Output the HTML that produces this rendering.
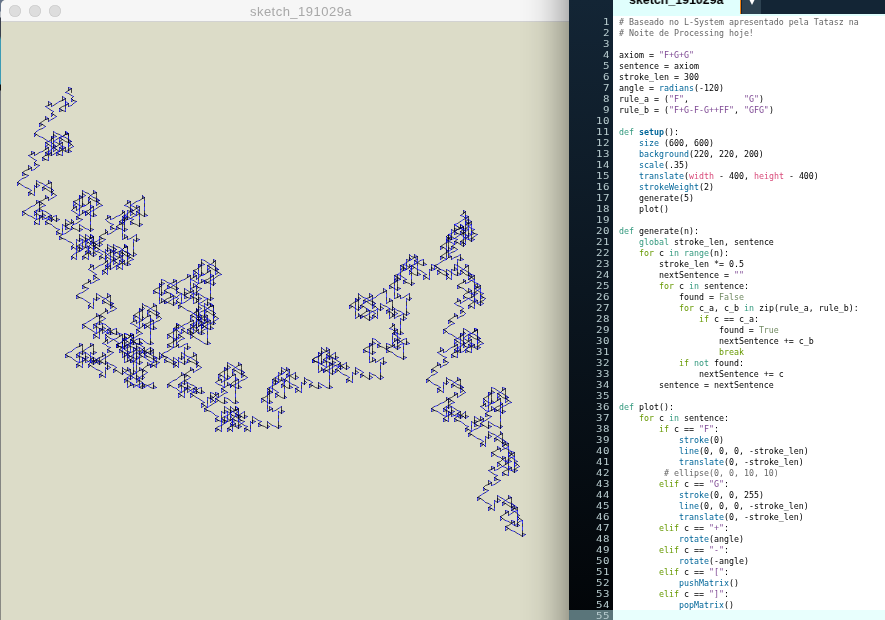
<!DOCTYPE html>
<html><head><meta charset="utf-8"><title>sketch_191029a</title>
<style>
html,body{margin:0;padding:0}
body{width:885px;height:620px;overflow:hidden;position:relative;background:#dcdcc8;font-family:"Liberation Sans",sans-serif}
#desk{position:absolute;left:0;top:0;width:8px;height:620px;background:linear-gradient(#66748a 0,#66748a 11px,#b8bcc2 12px,#b8bcc2 17px,#3a404c 18px,#3a404c 36px,#3c9bb5 40px,#3c9bb5 84px,#111 85px,#111 90px,#74787e 91px,#8a8a84 100%)}
#win{position:absolute;left:1px;top:0;width:600px;height:620px;background:#dcdcc8;border-top-left-radius:5px;overflow:hidden}
#tb{position:absolute;left:0;top:0;width:600px;height:21px;background:#f6f6f6;border-bottom:1px solid #d2d2d2}
#tb i{position:absolute;top:5px;width:12px;height:12px;border-radius:50%;background:#dddddd;box-shadow:inset 0 0 0 0.6px #c9c9c9}
#title{position:absolute;left:0;top:1px;width:600px;will-change:transform;text-align:center;font-size:13px;line-height:22px;color:#a8a8a8;letter-spacing:0.48px}
#frac{position:absolute;left:0;top:0}
#frac path{fill:none;stroke-width:0.7;stroke-linecap:round;stroke-linejoin:round;}
#shadow{position:absolute;left:519px;top:0;width:50px;height:620px;background:linear-gradient(to right,rgba(0,0,0,0) 0,rgba(0,0,0,0.015) 22%,rgba(0,0,0,0.045) 42%,rgba(0,0,0,0.10) 62%,rgba(0,0,0,0.18) 82%,rgba(0,0,0,0.27) 100%)}
#ed{position:absolute;left:569px;top:0;width:316px;height:620px;background:#fff;overflow:hidden}
#gut{position:absolute;left:0;top:0;width:44px;height:620px;background:linear-gradient(#132535,#020508)}
#hdr{position:absolute;left:44px;top:0;width:272px;height:14px;background:#132535}
#band{position:absolute;left:44px;top:14px;width:272px;height:2px;background:#e0fffd}
#tab{position:absolute;left:44px;top:0;width:127px;height:16px;background:#e0fffd}
#tabt{will-change:transform;position:absolute;left:60px;top:-7.6px;transform:scaleX(0.954);transform-origin:0 0;font-weight:bold;font-size:13px;line-height:16px;color:#000;white-space:pre}
#org{position:absolute;left:171px;top:0;width:1px;height:14px;background:#ef8115}
#arr{position:absolute;left:173px;top:0;width:19px;height:14px;background:#2d4251}
#arr b{position:absolute;left:6px;top:-3px;width:0;height:0;border-left:4px solid transparent;border-right:4px solid transparent;border-top:8px solid #fff}
#hl{position:absolute;left:0;top:610px;width:316px;height:11px;background:#e8fffd}
#hlg{position:absolute;left:0;top:610px;width:44px;height:11px;background:#5a757a}
#nums{position:absolute;left:0;top:16px;width:40.6px;will-change:transform;transform:scaleX(1.15);transform-origin:100% 0}
.n{height:11px;line-height:11px;text-align:right;font-family:"DejaVu Sans Mono","Liberation Mono",monospace;font-size:9.4px;letter-spacing:0.51px;color:#b9cdd0;margin-right:-0.51px}
#code{position:absolute;left:50px;top:17px;will-change:transform}
.ln{height:11px;line-height:11px;white-space:pre;font-family:"DejaVu Sans Mono","Liberation Mono",monospace;font-size:8.3px;color:#000}
.ln i{font-style:normal}
.c{color:#666666}.s{color:#7d4793}.f{color:#006699}.k{color:#33997e}.g{color:#669900}.n2{}.ln .n{} 
i.n{color:#718a62;font-size:inherit;letter-spacing:0;margin:0;height:auto;line-height:inherit;font-family:inherit}
.v{color:#d94a7a}.b{color:#006699;font-weight:bold}
</style></head><body>
<div id="desk"></div>
<div id="win"><div id="tb"><i style="left:8px"></i><i style="left:28px"></i><i style="left:48px"></i></div><div id="title">sketch_191029a</div></div>
<svg id="frac" width="885" height="620" viewBox="0 0 885 620"><g transform="translate(0.5 0.5)">
<path stroke="#000" d="M71 92v-4M68 90v-3M68 90l-3 2M68 93l3 2M73 96l-2 2M73 100l-2 1M73 100l3 1M73 103l-2 2M68 106v-3M65 105v-4M65 105l-3 1l-3 2M62 110l-3 1M62 110l3 1M65 108v-3M65 101v-3M62 100v-4M62 100l-3 1M56 103l-3 2M51 106v-3M48 105v-4M48 105l-3 1M48 108l3 2M53 111l-2 2M53 114l-2 2M53 114l3 2M53 118l-2 1M48 121v-3M45 119v-3M45 119l-3 2l-3 2M42 124l-3 2M42 124l3 2M42 128l-3 1M36 131l-2 2M36 134l-2 2M36 134l3 2M42 137l3 2M48 141l-3 1M48 144l-3 2M48 144l3 2M51 142v-3M51 136l2 1M53 134l3 2M53 134v-3M56 133l3 1M62 136l-3 1M62 139l-3 2M62 139l3 2l3 1M68 139l3 2M68 139v-3v-3M65 134v-3M65 134l-3 2M65 137l3 2M71 144l-3 2M71 144l2 2M71 147l-3 2M65 151v-4M62 149v-3M62 149l-3 2l-3 1M59 154l-3 1M59 154l3 1M62 152v-3M62 146v-4M59 144v-3M59 144l-3 2M53 147l-2 2M48 151l-3 1M48 154l-3 1M48 154l3 1M51 152v-3M51 146l2 1M53 144l3 2M53 144v-3M56 142l3 2M62 146l-3 1M62 149l3 2l3 1M68 149l3 2M68 149v-3M59 137l-3 2M53 141v-4M51 139l-3 2M51 142l2 2M56 149l-3 2M56 149l3 2M56 152l-3 2M48 154v-3M45 155l-3 2M45 159l-3 1M45 159l3 1M48 157v-3M48 151v-4M45 149v-3M45 149l-3 2M39 152l-3 2M34 155v-3M31 154v-3M31 154l-3 1M31 157l3 2M36 160l-2 2M36 164l-2 1M36 164l3 1M36 167l-2 2M31 170v-3M28 169v-4M28 169l-3 1l-3 2M25 174l-3 1M25 174l3 1M25 177l-3 1M19 180l-2 2M19 183l-2 2M19 183l3 2M25 187l3 1M31 190l-3 2M31 193l-3 2M31 193l3 2M34 192v-4M34 185l2 2M36 183l3 2M36 183v-3M39 182l3 1M45 185l-3 2M45 188l-3 2M45 188l3 2l3 2M51 188l2 2M51 188v-3v-3M48 183v-3M48 183l-3 2M48 187l3 1M53 193l-2 2M53 193l3 2M53 197l-2 1M48 200v-3M45 198v-3M45 198l-3 2l-3 1M42 203l-3 2M42 203l3 2M42 206l-3 2M36 210l-2 1M36 213l-2 2M36 213l3 2M42 216l3 2M48 219l3 2M51 218l2 1M51 218v-3M48 216l-3 2M42 219v-3M39 218v-3M39 218l-3 1M36 216v-3M36 210l3 1M39 208l3 2M39 208v-3M36 203v-3M36 203l-2 2M31 206l-3 2M25 210l-3 1M25 213l-3 2M25 213l3 2M31 216l3 2M36 219l-2 2M36 223l-2 1M36 223l3 1M39 221v-3M42 213l3 2M42 213v-3M45 211l3 2M51 218l-3 1M53 219l3 2M56 218l3 1M56 218v-3M53 216l-2 2M48 219l-3 2M48 223l-3 1M48 223l3 1M53 226l3 2M59 229l-3 2M59 233l-3 1M59 233l3 1M62 231v-3M62 224l3 2M65 223l3 1M65 223v-4M68 221l3 2M73 224l-2 2M73 228l-2 1M73 228l3 1l3 2M79 228l3 1M79 228v-4M82 226l3 2M88 229l2 2M90 228l3 1M90 228v-4M90 221v-3M90 215l3 1M93 213l3 2M93 213v-3M90 211l-2 2M85 215v-4M82 213v-3M82 213l-3 2M79 211v-3M79 205l3 1M82 203l3 2M82 203v-3v-3M79 198v-3M79 198l-3 2l-3 1M76 203l-3 2M76 203l3 2M79 201v-3M82 193l3 2M82 193v-3M85 192l3 1M90 195l-2 2M90 198l-2 2M90 198l3 2l3 1M96 198l3 2M96 198v-3v-3M93 193v-3M93 193l-3 2M93 197l3 1M99 203l-3 2M99 203l3 2M99 206l-3 2M93 210v-4M90 208v-3M90 208l-2 2l-3 1M88 213l2 2M90 211v-3M90 205v-4M88 203v-3M88 203l-3 2M82 206l-3 2M76 210v-4M73 208v-3M73 208l-2 2M73 211l3 2M79 215l-3 1M79 218l-3 1M79 218l3 1M79 221l-3 2M73 224v-3M71 223v-4M71 223l-3 1M68 228l-3 1M68 228l3 1M68 231l-3 2M62 234l-3 2M62 238l-3 1M62 238l3 1M68 241l3 1M73 244l-2 2M73 247l-2 2M73 247l3 2M76 246v-4M76 239l3 2M79 238l3 1M79 238v-4M82 236l3 2M88 239l-3 2M88 242l-3 2M88 242l2 2l3 2M93 242l3 2M93 242v-3v-3M90 238v-4M90 238l-2 1M90 241l3 1M96 247l-3 2M96 247l3 2M96 251l-3 1M90 254v-3M88 252v-3M88 252l-3 2l-3 2M85 257l-3 2M85 257l3 2M88 256v-4M88 249v-3M85 247v-3M85 247l-3 2M79 251l-3 1M73 254l-2 2M73 257l-2 2M73 257l3 2M76 256v-4M76 249l3 2M79 247l3 2M79 247v-3M82 246l3 1M88 249l-3 2M88 252l2 2l3 2M93 252l3 2M93 252v-3M85 241l-3 1M79 244l-3 2M79 247l-3 2M82 246v-4M82 239l3 2M85 238v-4M88 236l2 2M93 239l-3 2M93 242l-3 2M96 244l3 2M99 242l3 2M99 242v-3M96 241l-3 1M90 244l-2 2M90 247l-2 2M90 247l3 2M96 251l3 1M102 254l-3 2M102 257l-3 2M102 257l3 2M105 256v-4M105 249l2 2M107 247l3 2M107 247v-3M110 246l3 1M116 249l-3 2M116 252l-3 2M116 252l3 2l3 2M122 252l2 2M122 252v-3M124 251l3 1M130 254l3 2M133 252l3 2M133 252v-3M133 246v-4M133 239l3 2M136 238l3 1M136 238v-4M133 236l-3 2M127 239v-3M124 238v-4M124 238l-2 1M122 236v-3M122 229l2 2M124 228l3 1M124 228v-4v-3M122 223v-4M122 223l-3 1l-3 2M119 228l-3 1M119 228l3 1M122 226v-3M124 218l3 1M124 218v-3M127 216l3 2M133 219l-3 2M133 223l-3 1M133 223l3 1l3 2M139 223l3 1M139 223v-4M139 216v-3M139 210v-4M136 208v-3M136 208l-3 2M130 211l-3 2M124 215l-2 1M124 218l-2 1M127 216v-3M127 210l3 1M130 208l3 2M130 208v-3M133 206l3 2M139 210l-3 1M139 213l-3 2M139 213l3 2l2 1M144 213l3 2M144 213v-3M144 206v-3M144 200v-3M142 198v-3M142 198l-3 2M136 201l-3 2M130 205v-4M127 203v-3M127 203l-3 2M127 206l3 2M133 213l-3 2M133 213l3 2M133 216l-3 2M122 219l-3 2M122 223l2 1M124 215v-4M122 213v-3M122 213l-3 2M116 216l-3 2M110 219v-3M107 218v-3M107 218l-2 1M107 221l3 2M113 224l-3 2M113 228l-3 1M113 228l3 1M113 231l-3 2M107 234v-3M105 233v-4M105 233l-3 1l-3 2M102 238l-3 1M102 238l3 1M102 241l-3 1M102 251l3 1M107 254l-2 2M107 257l-2 2M107 257l3 2M110 256v-4M110 249l3 2M113 247v-3M116 246l3 1M122 249l-3 2M122 252l-3 2M124 254l3 2M127 252v-3v-3M124 247v-3M124 247l-2 2M130 257l-3 2M130 257l3 2M130 260l-3 2M124 264v-4M122 262v-3M122 262l-3 2l-3 1M119 267l-3 2M119 267l3 2M122 265v-3M122 259v-3M119 257v-3M119 257l-3 2M113 260l-3 2M107 264l-2 1M107 267l-2 2M107 267l3 2M110 265v-3M110 259l3 1M113 257l3 2M113 257v-3M116 256l3 1M122 259l-3 1M122 262l2 2l3 1M127 262l3 2M127 262v-3M119 251l-3 1M110 252l-3 2M110 256l3 1M116 262l-3 2M116 262l3 2M116 265l-3 2M107 267v-3M105 269l-3 1M105 272l-3 2M105 272l2 2M107 270v-3M107 264v-4M105 262v-3M105 262l-3 2M99 265l-3 2M93 269v-4M90 267v-3M90 267l-2 2M90 270l3 2M96 274l-3 1M96 277l-3 2M96 277l3 2M96 280l-3 2M90 283v-3M88 282v-3M88 282l-3 1l-3 2M85 287l-3 1M85 287l3 1M85 290l-3 2M79 293l-3 2M79 297l-3 1M79 297l3 1M85 300l3 2M90 303l-2 2M90 306l-2 2M90 306l3 2M93 305v-3M93 298l3 2M96 297l3 1M96 297v-4M99 295l3 2M105 298l-3 2M105 302l-3 1M105 302l2 1l3 2M110 302l3 1M110 302v-4v-3M107 297v-4M107 297l-2 1M107 300l3 2M113 306l-3 2M113 306l3 2M113 310l-3 1M107 313v-3M105 311v-3M105 311l-3 2l-3 2M102 316l-3 2M102 316l3 2M102 320l-3 1M96 323l-3 1M96 326l-3 2M96 326l3 2M102 329l3 2M107 333l3 1M110 331l3 2M110 331v-3M107 329l-2 2M102 333v-4M99 331v-3M99 331l-3 2M96 329v-3M96 323l3 1M99 321l3 2M99 321v-3M96 316v-3M96 316l-3 2M90 320l-2 1M85 323l-3 1M85 326l-3 2M85 326l3 2M90 329l3 2M96 333l-3 1M96 336l-3 2M96 336l3 2M99 334v-3M102 326l3 2M102 326v-3M105 324l2 2M110 331l-3 2M113 333l3 1M116 331l3 2M116 331v-3M113 329l-3 2M107 333l-2 1M107 336l-2 2M107 336l3 2M113 339l3 2M119 343l-3 1M119 346l-3 1M119 346l3 1M122 344v-3M122 338l2 1M124 336l3 2M124 336v-3M127 334l3 2M133 338l-3 1M133 341l-3 2M133 341l3 2l3 1M139 341l3 2M139 341v-3M142 339l2 2M147 343l3 1M150 341l3 2M150 341v-3M150 334v-3M150 328l3 1M153 326l3 2M153 326v-3M150 324l-3 2M144 328v-4M142 326v-3M142 326l-3 2M139 324v-3M139 318l3 2M142 316l2 2M142 316v-3v-3M139 311v-3M139 311l-3 2l-3 2M136 316l-3 2M136 316l3 2M139 315v-4M142 306l2 2M142 306v-3M144 305l3 1M150 308l-3 2M150 311l-3 2M150 311l3 2l3 2M156 311l3 2M156 311v-3v-3M153 306v-3M153 306l-3 2M153 310l3 1M159 316l-3 2M159 316l2 2M159 320l-3 1M153 323v-3M150 321v-3M150 321l-3 2l-3 1M147 326l3 2M150 324v-3M150 318v-3M147 316v-3M147 316l-3 2M142 320l-3 1M136 323v-3M133 321v-3M133 321l-3 2M133 324l3 2M139 328l-3 1M139 331l-3 2M139 331l3 2M139 334l-3 2M133 338v-4M130 336v-3M130 336l-3 2M127 341l-3 2M127 341l3 2M127 344l-3 2M122 347l-3 2M122 351l-3 1M122 351l2 1M127 354l3 2M133 357l-3 2M133 361l-3 1M133 361l3 1M136 359v-3M136 352l3 2M139 351l3 1M139 351v-4M142 349l2 2M147 352l-3 2M147 356l-3 1M147 356l3 1l3 2M153 356l3 1M153 356v-4v-3M150 351v-4M150 351l-3 1M150 354l3 2M156 361l-3 1M156 361l3 1M156 364l-3 1M150 367v-3M147 365v-3M147 365l-3 2l-2 2M144 370l-2 2M144 370l3 2M144 374l-2 1M139 377l-3 2M139 380l-3 2M139 380l3 2M144 384l3 1M150 387l3 1M153 385l3 2M153 385v-3M150 384l-3 1M144 387v-3M142 385v-3M142 385l-3 2M139 384v-4M139 377l3 2M142 375l2 2M142 375v-3M139 370v-3M139 370l-3 2M133 374l-3 1M127 377l-3 2M127 380l-3 2M127 380l3 2M133 384l3 1M139 387l3 1M142 385l2 2M139 384l-3 1M133 387v-3M130 385v-3M130 385l-3 2M127 384v-4M127 377l3 2M130 375l3 2M130 375v-3v-3M127 370v-3M127 370l-3 2M127 374l3 1M133 377l3 2M136 375l3 2M136 375v-3M136 369v-4M136 362l3 2M139 361l3 1M139 361v-4M136 359l-3 2M127 361v-4M127 361l-3 1M124 359v-3M127 351l3 1M127 351v-4v-3M124 346v-3M122 338v-4M119 336v-3M119 336l-3 2M113 339l-3 2M107 343v-4M105 341v-3M105 341l-3 2M105 344l2 2M110 347l-3 2M110 351l-3 1M110 351l3 1M110 354l-3 2M105 357v-3M102 356v-4M102 356l-3 1l-3 2M99 361l-3 1M99 361l3 1l3 2M105 361l2 1M105 361v-4M102 359l-3 2M93 361v-4M93 361l-3 1M90 359v-3M90 352l3 2M93 351l3 1M93 351v-4v-3M90 346v-3M90 346l-2 1M85 349l-3 2M79 352l-3 2M79 356l-3 1M79 356l3 1M85 359l3 2M90 362l3 2M93 361l3 1M90 359l-2 2M85 362v-3M82 361v-4M82 361l-3 1M79 359v-3M79 352l3 2M82 351l3 1M82 351v-4v-3M79 346v-3M79 346l-3 1M73 349l-2 2M68 352l-3 2M68 356l-3 1M68 356l3 1M73 359l3 2M79 362l-3 2M79 365l-3 2M79 365l3 2M82 364v-3M85 356l3 1M85 356v-4M88 354l2 2M96 362l3 2M99 361v-4M90 362l-2 2M90 365l-2 2M90 365l3 2M96 369l3 1M102 372l-3 2M102 375l-3 2M102 375l3 2M105 374v-4M105 367l2 2M107 365l3 2M107 365v-3M110 364l3 1M116 367l-3 2M116 370l-3 2M116 370l3 2l3 2M122 370l2 2M122 370v-3M124 369l3 1M130 372l3 2M133 370l3 2M133 370v-3M133 364v-3M133 357l3 2M136 356l3 1M133 354l-3 2M127 357v-3M124 356l-2 1M122 354v-3M122 347l2 2M124 346l3 1M122 341l-3 2M136 339l-3 2M130 346l-3 1M130 346l3 1M136 349l3 2M142 352l2 2M144 351v-4M142 349l-3 2M136 352v-3M133 351v-4M133 351l-3 1M130 349v-3M130 343l3 1M133 341v-3M124 349l3 2M133 354v-3M136 346l3 1M136 346v-3M139 344l3 2M144 351l-2 1M150 351l3 1M147 349l-3 2M142 356l-3 1M142 356l2 1M147 359l3 2M153 362l-3 2M153 365l3 2M156 364v-3M156 357l3 2M159 356l2 1M159 356v-4M161 354l3 2M167 357l-3 2M167 361l-3 1M167 361l3 1l3 2M173 361l3 1M173 361v-4M176 359l2 2M181 362l3 2M184 361l3 1M184 361v-4M184 354v-3M184 347l3 2M187 346l3 1M187 346v-3M184 344l-3 2M178 347v-3M176 346v-3M176 346l-3 1M173 344v-3M173 338l3 1M176 336l2 2M176 336v-3v-4M173 331v-3M173 331l-3 2l-3 1M170 336l-3 2M170 336l3 2M173 334v-3M176 326l2 2M176 326v-3M178 324l3 2M184 328l-3 1M184 331l-3 2M184 331l3 2l3 1M190 331l3 2M190 331v-3M193 329l3 2M198 333l3 1M201 331l3 2M201 331v-3M201 324v-3M201 318v-3M198 316v-3M198 316l-2 2M198 320l3 1M204 323l-3 1M204 326l-3 2M204 326l3 2M204 329l-3 2M198 333v-4M196 331v-3M196 331l-3 2M193 336l-3 2M193 336l3 2M198 339l3 2M204 343l3 1M207 341l3 2M207 341v-3M207 334v-3M207 328l3 1M210 326l3 2M210 326v-3M207 324l-3 2M198 326v-3M198 326l-2 2M196 324v-3M198 316l3 2M198 313v-3M196 311v-3M196 311l-3 2M196 315l2 1M201 318l3 2M204 316l3 2M204 316v-3M204 310v-4M204 303l3 2M207 302l3 1M207 302v-4M204 300l-3 2M198 303v-3M196 302v-4M196 302l-3 1M193 300v-3M193 293l3 2M196 292l2 1M196 292v-4v-3M193 287v-4M193 287l-3 1M190 285v-3M190 279v-4M187 277v-3M187 277l-3 2M181 280l-3 2M176 283v-3M173 282v-3M173 282l-3 1M173 285l3 2M178 288l-2 2M178 292l-2 1M178 292l3 1M178 295l-2 2M173 298v-3M170 297v-4M170 297l-3 1l-3 2M167 302l-3 1M167 302l3 1l3 2M173 302l3 1M173 302v-4M170 300l-3 2M161 302v-4M161 302l-2 1M159 300v-3M159 293l2 2M161 292l3 1M161 292v-4v-3M159 287v-4M159 287l-3 1l-3 2M156 292l-3 1M156 292l3 1M159 290v-3M161 282l3 1M161 282v-3M164 280l3 2M170 283l-3 2M170 287l-3 1M170 287l3 1l3 2M176 287v-4M173 285l-3 2M167 288l-3 2M167 292l-3 1M167 292l3 1M173 295l3 2M178 298l-2 2M178 302l-2 1M178 302l3 1M181 300v-3M181 293l3 2M184 292l3 1M184 292v-4M187 290l3 2M193 293l-3 2M193 297l-3 1M193 297l3 1M198 297l3 1M198 297v-4M201 295l3 2M207 298l3 2M210 297l3 1M210 297v-4M210 290v-3M210 283l3 2M213 282l2 1M213 282v-3M210 280l-3 2M204 283v-3M201 282v-3M201 282l-3 1M198 280v-3M198 274l3 1M201 272l3 2M201 272v-3v-4M198 267v-3M198 267l-2 2l-3 1M196 272l-3 2M196 272l2 2M198 270v-3M201 262l3 2M201 262v-3M204 260l3 2M210 264l-3 1M210 267l-3 2M210 267l3 2l2 1M215 267l3 2M215 267v-3v-4M213 262v-3M213 262l-3 2M213 265l2 2M218 272l-3 2M218 272l3 2M218 275l-3 2M213 279v-4M210 277v-3M210 277l-3 2l-3 1M207 282l3 1M210 280v-3M210 274v-4M207 272v-3M207 272l-3 2M201 275l-3 2M196 279v-4M193 277v-3M193 277l-3 2M193 280l3 2M198 283l-2 2M198 287l-2 1M198 287l3 1M198 290l-2 2M193 293v-3M190 292v-4M190 292l-3 1M187 297l-3 1M187 297l3 1M187 300l-3 2M181 303l-3 2M181 306l-3 2M181 306l3 2M187 310l3 1M193 313l-3 2M193 316l-3 2M193 316l3 2M196 315v-4M198 306l3 2M198 306v-3M201 305l3 1M207 308l-3 2M207 311l-3 2M207 311l3 2l3 2M213 311l2 2M213 311v-3v-3M210 306v-3M210 306l-3 2M210 310l3 1M215 316l-2 2M215 316l3 2M215 320l-2 1M210 323v-3M207 321v-3M207 321l-3 2M207 324v-3M207 318v-3M204 316l-3 2M198 320l-2 1M193 323l-3 1M193 326l-3 2M193 326l3 2M201 315l3 1M207 321l3 2l3 1M213 321l2 2M213 321v-3M204 310l-3 1M201 321l-3 2M193 326v-3M190 328l-3 1M190 331l-3 2M193 329v-3M193 323v-3M190 321v-3M190 321l-3 2M184 324l-3 2M178 328v-4M176 326l-3 2M176 329l2 2M181 333l-3 1M181 336l-3 2M181 336l3 2M181 339l-3 2M176 343v-4M173 341l-3 2l-3 1M170 346l-3 1M170 346l3 1M170 349l-3 2M164 352l-3 2M164 356l-3 1M170 359l3 2M176 365l-3 2M176 365l2 2M178 364v-3M178 357l3 2M181 356l3 1M181 356v-4M184 354l3 2M190 357l-3 2M190 361l-3 1M190 361l3 1l3 2M196 361l2 1M196 361v-4v-3M193 356v-4M193 356l-3 1M193 359l3 2M198 365l-2 2M198 365l3 2M198 369l-2 1M193 372v-3M190 370v-3M190 370l-3 2l-3 2M187 375l-3 2M187 375l3 2M187 379l-3 1M181 382l-3 2M181 385l-3 2M181 385l3 2M187 388l3 2M193 392l3 1M196 390l2 2M196 390v-3M193 388l-3 2M187 392v-4M184 390v-3M184 390l-3 2M181 388v-3M181 382l3 2M184 380l3 2M184 380v-3M181 375v-3M181 375l-3 2M176 379l-3 1M170 382l-3 2M170 385l-3 2M170 385l3 2M176 388l2 2M181 392l-3 1M181 395l-3 2M181 395l3 2M184 393v-3M187 385l3 2M187 385v-3M190 384l3 1M196 390l-3 2M198 392l3 1M201 390l3 2M201 390v-3M198 388l-2 2M193 392l-3 1M193 395l-3 2M193 395l3 2M198 398l3 2M204 402l-3 1M204 405l-3 2M204 405l3 2M207 403v-3M207 397l3 1M210 395l3 2M210 395v-3M213 393l2 2M218 397l-3 1M218 400l-3 2M218 400l3 2l3 1M224 400l3 2M224 400v-3M227 398l3 2M232 402l3 1M235 400l3 2M235 400v-3M235 393v-3M235 387l3 1M238 385l3 2M238 385v-3M235 384l-3 1M230 387v-3M227 385v-3M227 385l-3 2M224 384v-4M224 377l3 2M227 375l3 2M227 375v-3v-3M224 370v-3M224 370l-3 2l-3 2M221 375l-3 2M221 375l3 2M224 374v-4M227 365l3 2M227 365v-3M230 364l2 1M235 367l-3 2M235 370l-3 2M235 370l3 2l3 2M241 370l3 2M241 370v-3v-3M238 365v-3M238 365l-3 2M238 369l3 1M244 375l-3 2M244 375l3 2M244 379l-3 1M238 382v-3M235 380v-3M235 380l-3 2l-2 2M232 385l3 2M235 384v-4M235 377v-3M232 375v-3M232 375l-2 2M227 379l-3 1M221 382v-3M218 380v-3M218 380l-3 2M218 384l3 1M224 387l-3 1M224 390l-3 2M224 390l3 2M224 393l-3 2M218 397v-4M215 395v-3M215 395l-2 2M213 400l-3 2M213 400l2 2M213 403l-3 2M207 407l-3 1M207 410l-3 1M207 410l3 1M213 413l2 2M218 416l-3 2M218 420l-3 1M218 420l3 1M221 418v-3M221 411l3 2M224 410l3 1M224 410v-4M227 408l3 2M232 411l-2 2M232 415l-2 1M232 415l3 1l3 2M238 415l3 1M238 415v-4v-3M235 410v-4M235 410l-3 1M235 413l3 2M241 420l-3 1M241 420l3 1M241 423l-3 2M235 426v-3M232 425v-4M232 425l-2 1l-3 2M230 429l-3 2M230 429l2 2M232 428v-3M232 421v-3M230 420v-4M230 420l-3 1M224 423l-3 2M218 426l-3 2M218 429l-3 2M218 429l3 2M221 428v-3M221 421l3 2M224 420l3 1M224 420v-4M227 418l3 2M232 421l-2 2M232 425l3 1l3 2M238 425l3 1M238 425v-4M230 413l-3 2M224 416l-3 2M224 420l-3 1M227 418v-3M227 411l3 2M230 410v-4M232 408l3 2M238 411l-3 2M238 415l-3 1M241 416l3 2M244 415l3 1M244 415v-4M241 413l-3 2M235 416l-3 2M235 420l-3 1M235 420l3 1M241 423l3 2M247 426l-3 2M247 429l-3 2M247 429l3 2M250 428v-3M250 421l2 2M252 420l3 1M252 420v-4M255 418l3 2M261 421l-3 2M261 425l-3 1M261 425l3 1l3 2M267 425l2 1M267 425v-4M269 423l3 2M275 426l3 2M278 425l3 1M278 425v-4M278 418v-3M278 411l3 2M281 410l3 1M281 410v-4M278 408l-3 2M272 411v-3M269 410v-4M269 410l-2 1M267 408v-3M267 402l2 1M269 400l3 2M269 400v-3v-4M267 395v-3M267 395l-3 2l-3 1M264 400l-3 2M264 400l3 2M267 398v-3M269 390l3 2M269 390v-3M272 388l3 2M278 392l-3 1M278 395l-3 2M278 395l3 2l3 1M284 395l2 2M284 395v-3M284 388v-3M284 382v-3M281 380v-3M281 380l-3 2M275 384l-3 1M269 387l-2 1M269 390l-2 2M272 388v-3M272 382l3 2M275 380l3 2M275 380v-3M278 379l3 1M284 382l-3 2M284 385l-3 2M284 385l2 2l3 1M289 385l3 2M289 385v-3M289 379v-4M289 372v-3M286 370v-3M286 370l-2 2M281 374l-3 1M275 377l-3 2M275 380l-3 2M278 379v-4M278 372l3 2M281 370l3 2M281 370v-3M284 369l2 1M289 372l-3 2M289 375l-3 2M289 375l3 2l3 2M295 375l3 2M295 375v-3M292 374l-3 1M286 377l-2 2M286 380l-2 2M286 380l3 2M292 384l3 1M298 387l-3 1M298 390l-3 2M298 390l3 2M301 388v-3M301 382l3 2M304 380l2 2M304 380v-3M306 379l3 1M312 382l-3 2M312 385l-3 2M312 385l3 2l3 1M318 385l3 2M318 385v-3M321 384l2 1M326 387l3 1M329 385l3 2M329 385v-3M329 379v-4M329 372l3 2M332 370l3 2M332 370v-3M329 369l-3 1M323 372v-3M321 370v-3M321 370l-3 2M318 369v-4M318 362l3 2M321 361l2 1M321 361v-4v-3M318 356v-4M318 356l-3 1l-3 2M315 361l-3 1M315 361l3 1M318 359v-3M321 351l2 1M321 351v-4M323 349l3 2M329 352l-3 2M329 356l-3 1M329 356l3 1l3 2M335 356l3 1M335 356v-4M332 354l-3 2M326 357l-3 2M326 361l-3 1M326 361l3 1M332 364l3 1M338 367l2 2M340 365l3 2M340 365v-3M338 364l-3 1M332 367v-3M329 365v-3M329 365l-3 2M326 364v-3M326 357l3 2M329 356v-4v-3M326 351v-4M326 351l-3 1M321 364l2 1M326 367l-3 2M326 370l3 2M329 369v-4M332 361l3 1M332 361v-4M335 359l3 2M340 365l-2 2M343 367l3 2M346 365l3 2M346 365v-3M343 364l-3 1M338 367l-3 2M338 370l-3 2M338 370l2 2M343 374l3 1M349 377l-3 2M349 380l-3 2M349 380l3 2M352 379v-4M352 372l3 2M355 370l3 2M355 370v-3M358 369l2 1M363 372l-3 2M363 375l-3 2M363 375l3 2l3 2M369 375l3 2M369 375v-3M372 374l3 1M377 377l3 2M380 375l3 2M380 375v-3M380 369v-4M380 362l3 2M383 361l3 1M383 361v-4M380 359l-3 2M375 362v-3M372 361v-4M372 361l-3 1M369 359v-3M369 352l3 2M372 351l3 1M372 351v-4v-3M369 346v-3M369 346l-3 1l-3 2M366 351l-3 1M366 351l3 1M369 349v-3M372 341l3 2M372 341v-3M375 339l2 2M380 343l-3 1M380 346l-3 1M380 346l3 1l3 2M386 346l3 1M386 346v-3M389 344l3 2M394 347l3 2M397 346l3 1M397 346v-3M397 339v-3M397 333v-4M394 331v-3M394 331l-2 2M394 334l3 2M400 338l-3 1M400 341l-3 2M400 341l3 2M400 344l-3 2M394 347v-3M392 346v-3M392 346l-3 1M389 351l-3 1M389 351l3 1M394 354l3 2M400 357l3 2M403 356l3 1M403 356v-4M403 349v-3M403 343l3 1M406 341l3 2M406 341v-3M403 339l-3 2M394 341v-3M394 341l-2 2M392 339v-3M394 331l3 2M394 328v-4M392 326v-3M392 326l-3 2M392 329l2 2M397 333l3 1M400 331l3 2M400 331v-3M400 324v-3M400 318l3 2M403 316l3 2M403 316v-3M400 315l-3 1M394 318v-3M392 316v-3M392 316l-3 2M389 315v-4M389 308l3 2M392 306l2 2M392 306v-3v-3M389 301v-3M389 301l-3 2M386 300v-3M386 293v-3M383 292v-4M383 292l-3 1M377 295l-2 2M372 298v-3M369 297v-4M369 297l-3 1M369 300l3 1M375 303l-3 2M375 306l-3 2M375 306l2 2M375 310l-3 1M369 313v-3M366 311v-3M366 311l-3 2l-3 2M363 316l-3 2M363 316l3 2l3 2M369 316l3 2M369 316v-3M366 315l-3 1M358 316v-3M358 316l-3 2M355 315v-4M355 308l3 2M358 306l2 2M358 306v-3v-3M355 301v-3M355 301l-3 2l-3 2M352 306l-3 2M352 306l3 2M355 305v-4M358 297l2 1M358 297v-4M360 295l3 2M366 298l-3 2M366 301l-3 2M366 301l3 2l3 2M372 301v-3M369 300l-3 1M363 303l-3 2M363 306l-3 2M363 306l3 2M369 310l3 1M375 313l-3 2M375 316l-3 2M375 316l2 2M377 315v-4M377 308l3 2M380 306l3 2M380 306v-3M383 305l3 1M389 308l-3 2M389 311l-3 2M389 311l3 2M394 311l3 2M394 311v-3M397 310l3 1M403 313l3 2M406 311l3 2M406 311v-3M406 305v-4M406 298l3 2M409 297l2 1M409 297v-4M406 295l-3 2M400 298v-3M397 297v-4M397 297l-3 1M394 295v-3M394 288l3 2M397 287l3 1M397 287v-4v-3M394 282v-3M394 282l-2 1l-3 2M392 287l-3 1M392 287l2 1M394 285v-3M397 277l3 2M397 277v-3M400 275l3 2M406 279l-3 1M406 282l-3 1M406 282l3 1l2 2M411 282l3 1M411 282v-3M411 275v-3M411 269v-4M409 267v-3M409 267l-3 2M403 270l-3 2M397 274l-3 1M397 277l-3 2M400 275v-3M400 269l3 1M403 267l3 2M403 267v-3M406 265l3 2M411 269l-2 1M411 272l-2 2M411 272l3 2l3 1M417 272l3 2M417 272v-3M417 265v-3M417 259v-3M414 257v-3M414 257l-3 2M409 260l-3 2M403 264l-3 1M403 267l-3 2M406 265v-3M406 259l3 1M409 257l2 2M409 257v-3M411 256l3 1M417 259l-3 1M417 262l-3 2M417 262l3 2l3 1M423 262l3 2M423 262v-3M420 260l-3 2M414 264l-3 1M414 267l-3 2M414 267l3 2M420 270l3 2M426 274l-3 1M426 277l-3 2M426 277l3 2M429 275v-3M429 269l2 1M431 267l3 2M431 267v-3M434 265l3 2M440 269l-3 1M440 272l-3 2M440 272l3 2l3 1M446 272l2 2M446 272v-3M448 270l3 2M454 274l3 1M457 272l3 2M457 272v-3M457 265v-3M457 259l3 1M460 257l3 2M460 257v-3M457 256l-3 1M451 259v-3M448 257v-3M448 257l-2 2M446 256v-4M446 249l2 2M448 247l3 2M448 247v-3v-3M446 242v-3M446 242l-3 2l-3 2M443 247l-3 2M443 247l3 2M446 246v-4M448 238l3 1M448 238v-4M451 236l3 2M457 239l-3 2M457 242l-3 2M457 242l3 2l3 2M463 242l2 2M463 242v-3M463 236v-3M463 229v-3M460 228v-4M460 228l-3 1M454 231l-3 2M448 234l-2 2M448 238l-2 1M451 236v-3M451 229l3 2M454 228l3 1M454 228v-4M457 226l3 2M463 229l-3 2M463 233l-3 1M463 233l2 1l3 2M468 233l3 1M468 233v-4M468 226v-3M468 219v-3M465 218v-3M465 218l-2 1M460 221l-3 2M463 229l2 2M465 228l3 1M465 228v-4M465 221v-3M465 215v-4M463 213v-3M463 213l-3 2M463 216l2 2M468 219l-3 2M468 223l-3 1M468 223l3 1M468 226l-3 2M457 233l-3 1M457 233l3 1M463 236l2 2M468 239l3 2M471 238l3 1M471 238v-4M471 231v-3M471 224v-3M468 226l3 2M474 229l-3 2M474 233l-3 1M474 233l3 1M474 236l-3 2M468 239v-3M465 238v-4M465 238l-2 1l-3 2M463 242l-3 2M465 241v-3M465 234v-3M457 236l-3 2M448 241l3 1M454 244l-3 2M454 247l-3 2M454 247l3 2M454 251l-3 1M448 254v-3M446 252l-3 2l-3 2M443 257l-3 2M443 257l3 2M443 260l-3 2M437 264l-3 1M437 267l-3 2M443 270l3 2M448 277l-2 2M448 277l3 2M451 275v-3M451 269l3 1M454 267l3 2M454 267v-3M457 265l3 2M463 269l-3 1M463 272l-3 2M463 272l2 2l3 1M468 272l3 2M468 272v-3v-4M465 267v-3M465 267l-2 2M465 270l3 2M471 277l-3 2M471 277l3 2M471 280l-3 2M465 283v-3M463 282v-3M463 282l-3 1l-3 2M460 287l-3 1M460 287l3 1M465 290l3 2M471 293l3 2M474 292l3 1M474 292v-4M474 285v-3M474 279v-4M471 277v-3M471 280l3 2M477 283l-3 2M477 287l-3 1M477 287l3 1M477 290l-3 2M471 293v-3M468 292v-4M468 292l-3 1l-2 2M465 297l-2 1M465 297l3 1M471 300l3 1M477 303l3 2M480 301l3 2M480 301v-3M480 295v-3M480 288v-3M477 287v-4M477 290l3 2M483 293l-3 2M483 297l-3 1M483 297l2 1M483 300l-3 1M477 303v-3M474 301v-3M474 301l-3 2l-3 2M471 306l-3 2M471 306l3 2M474 305v-4M474 298v-3M471 297v-4M471 297l-3 1M465 300l-2 1M460 303v-3M457 301v-3M457 301l-3 2M457 305l3 1M463 308l-3 2M463 311l-3 2M463 311l2 2M463 315l-3 1M457 318v-3M454 316v-3M454 316l-3 2l-3 2M451 321l-3 2M451 321l3 2M451 324l-3 2M446 328l-3 1M446 331l-3 2M446 331l2 2M451 334l3 2M457 338l-3 1M457 341l-3 2M457 341l3 2M460 339v-3M460 333l3 1M463 331l2 2M463 331v-3M465 329l3 2M471 333l-3 1M471 336l-3 2M471 336l3 2l3 1M477 336l3 2M477 336v-3v-4M474 331v-3M474 331l-3 2M474 334l3 2M480 341l-3 2M480 341l3 2M480 344l-3 2M474 347v-3M471 346v-3M471 346l-3 1l-3 2M468 351l-3 1M468 351l3 1M471 349v-3M471 343v-4M468 341v-3M468 341l-3 2M463 344l-3 2M457 347l-3 2M457 351l-3 1M457 351l3 1M460 349v-3M460 343l3 1M463 341l2 2M463 341v-3M465 339l3 2M471 343l-3 1M471 346l3 1l3 2M477 346l3 1M477 346v-3M468 334l-3 2M463 338v-4M460 336l-3 2M460 339l3 2M465 346l-2 1M465 346l3 1M465 349l-2 2M457 351v-4M454 352l-3 2M454 356l-3 1M454 356l3 1M457 354v-3M457 347v-3M454 346v-3M454 346l-3 1M448 349l-2 2M443 352v-3M440 351v-4M440 351l-3 1M440 354l3 2M446 357l-3 2M446 361l-3 1M446 361l2 1M446 364l-3 1M440 367v-3M437 365v-3M437 365l-3 2l-3 2M434 370l-3 2M434 370l3 2M434 374l-3 1M429 377l-3 2M429 380l-3 2M429 380l2 2M434 384l3 1M440 387l-3 1M440 390l-3 2M440 390l3 2M443 388v-3M443 382l3 2M446 380l2 2M446 380v-3M448 379l3 1M454 382l-3 2M454 385l-3 2M454 385l3 2l3 1M460 385l3 2M460 385v-3v-3M457 380v-3M457 380l-3 2M457 384l3 1M463 390l-3 2M463 390l2 2M463 393l-3 2M457 397v-4M454 395v-3M454 395l-3 2l-3 1M451 400l-3 2M451 400l3 2M451 403l-3 2M446 406l-3 2M446 410l-3 1M446 410l2 1M451 413l3 2M457 416l3 2M460 415l3 1M460 415v-4M457 413l-3 2M451 416v-3M448 415v-4M448 415l-2 1M446 413v-3M446 406l2 2M448 405l3 1M448 405v-3M446 400v-3M446 400l-3 2M440 403l-3 2M434 406l-3 2M434 410l-3 1M434 410l3 1M440 413l3 2M446 416l-3 2M446 420l-3 1M446 420l2 1M448 418v-3M451 410l3 1M451 410v-4M454 408l3 2M460 415l-3 1M463 416l2 2M465 415l3 1M465 415v-4M463 413l-3 2M457 416l-3 2M457 420l-3 1M457 420l3 1M463 423l2 2M468 426l-3 2M468 429l-3 2M468 429l3 2M471 428v-3M471 421l3 2M474 420l3 1M474 420v-4M477 418l3 2M483 421l-3 2M483 425l-3 1M483 425l2 1l3 2M488 425l3 1M488 425v-4M491 423l3 2M497 426l3 2M500 425l2 1M500 425v-4M500 418v-3M500 411l2 2M502 410l3 1M502 410v-4M500 408l-3 2M494 411v-3M491 410v-4M491 410l-3 1M488 408v-3M488 402l3 1M491 400l3 2M491 400v-3v-4M488 395v-3M488 395l-3 2l-2 1M485 400l-2 2M485 400l3 2M488 398v-3M491 390l3 2M491 390v-3M494 388l3 2M500 392l-3 1M500 395l-3 2M500 395l2 2l3 1M505 395l3 2M505 395v-3v-4M502 390v-3M502 390l-2 2M502 393l3 2M508 400l-3 2M508 400l3 2M508 403l-3 2M502 406v-3M500 405v-3M500 405l-3 1l-3 2M497 410l3 1M500 408v-3M500 402v-4M497 400v-3M497 400l-3 2M491 403l-3 2M485 406v-3M483 405v-3M483 405l-3 1M483 408l2 2M488 411l-3 2M488 415l-3 1M488 415l3 1M488 418l-3 2M483 421v-3M480 420v-4M480 420l-3 1M477 425l-3 1M477 425l3 1M477 428l-3 1M471 431l-3 2M471 434l-3 2M471 434l3 2M477 438l3 1M483 441l-3 2M483 444l-3 2M483 444l2 2M485 443v-4M485 436l3 2M488 434l3 2M488 434v-3M491 433l3 1M497 436l-3 2M497 439l-3 2M497 439l3 2l2 2M502 439l3 2M502 439v-3v-3M500 434v-3M500 434l-3 2M500 438l2 1M505 444l-3 2M505 444l3 2M505 448l-3 1M500 451v-3M497 449v-3M497 449l-3 2l-3 1M494 454l-3 2M494 454l3 2M500 457l2 2M505 461l3 1M508 459l3 2M508 459v-3M508 452v-3M508 446v-3M505 444v-3M505 448l3 1M511 451l-3 1M511 454l-3 2M511 454l3 2M511 457l-3 2M505 461v-4M502 459v-3M502 459l-2 2l-3 1M500 464l-3 2M500 464l2 2M505 467l3 2M511 470l3 2M514 469l3 1M514 469v-3M514 462v-3M514 456v-4M511 454v-3M511 457l3 2M517 461l-3 1M517 464l-3 2M517 464l2 2M517 467l-3 2M511 470v-3M508 469v-3M508 469l-3 1l-3 2M505 474l-3 1M505 474l3 1M508 472v-3M508 466v-4M505 464v-3M505 464l-3 2M500 467l-3 2M494 470v-3M491 469v-3M491 469l-3 1M491 472l3 2M497 475l-3 2M497 479l-3 1M497 479l3 1M497 482l-3 2M491 485v-3M488 484v-4M488 484l-3 1l-2 2M485 489l-2 1M485 489l3 1M485 492l-2 1M480 495l-3 2M480 498l-3 2M480 498l3 2M485 502l3 1M491 505l-3 2M491 508l-3 2M491 508l3 2M494 507v-4M494 500l3 2M497 498l3 2M497 498v-3M500 497l2 1M505 500l-3 2M505 503l-3 2M505 503l3 2l3 2M511 503l3 2M511 503v-3v-3M508 498v-3M508 498l-3 2M508 502l3 1M514 508l-3 2M514 508l3 2M514 511l-3 2M508 515v-4M505 513v-3M505 513l-3 2l-2 1M502 518l-2 2M502 518l3 2M508 521l3 2M514 525l3 1M517 523l2 2M517 523v-3M517 516v-3M517 510v-3M514 508v-3M514 511l3 2M519 515l-2 1M519 518l-2 2M519 518l3 2M519 521l-2 2M514 525v-4M511 523v-3M511 523l-3 2l-3 1M508 528l-3 2M508 528l3 2M514 531l3 2M519 534l3 2M522 533l3 1M522 533v-3M522 526v-3"/>
<path stroke="#00f" d="M71 88l-3 2M68 87l3 1M65 92l3 1M71 95l2 1M71 98l2 2M71 101v-3M76 101l-3 2M71 105l-3 1M68 103l-3 2M65 101l3 2M59 108l3 2M59 111v-3M65 111v-3M65 98l-3 2M62 96l3 2M59 101l-3 2M53 105l-2 1M51 103l-3 2M48 101l3 2M45 106l3 2M51 110l2 1M51 113l2 1M51 116v-3M56 116l-3 2M51 119l-3 2M48 118l-3 1M45 116l3 2M39 123l3 1M39 126v-3M45 126l-3 2M39 129l-3 2M34 133l2 1M34 136v-3M39 136l3 1M45 139l3 2M45 142l3 2M45 146v-4M51 146v-4M51 139v-3M53 137v-3M56 136l-3 1M53 131l3 2M59 134l3 2M59 137l3 2M59 141v-4M68 142v-3M71 141l-3 1M68 133l-3 1M65 131l3 2M62 136l3 1M68 142l3 2M68 146v-4M73 146l-2 1M68 149l-3 2M65 147l-3 2M62 146l3 1M56 152l3 2M56 155v-3M62 155v-3M62 142l-3 2M59 141l3 1M56 146l-3 1M51 149l-3 2M45 152l3 2M45 155v-3M51 155v-3M51 149v-3M53 147v-3M53 141l3 1M59 144l3 2M59 147l3 2M59 151v-4M68 152v-3M71 151l-3 1M56 139l-3 2M53 137l-2 2M48 141l3 1M53 147l3 2M53 151v-4M53 154l-2 1M51 152l-3 2M48 151l3 1M42 157l3 2M42 160v-3M48 160v-3M48 147l-3 2M45 146l3 1M42 151l-3 1M36 154l-2 1M34 152l-3 2M31 151l3 1M28 155l3 2M34 159l2 1M34 162l2 2M34 165v-3M39 165l-3 2M34 169l-3 1M31 167l-3 2M28 165l3 2M22 172l3 2M22 175v-3M28 175l-3 2M22 178l-3 2M17 182l2 1M17 185v-3M22 185l3 2M28 188l3 2M28 192l3 1M28 195v-3M34 195v-3M34 188v-3M36 187v-4M39 185l-3 2M36 180l3 2M42 183l3 2M42 187l3 1M42 190v-3M51 192v-4M53 190l-2 2M51 182l-3 1M48 180l3 2M45 185l3 2M51 192l2 1M51 195v-3M56 195l-3 2M51 198l-3 2M48 197l-3 1M45 195l3 2M39 201l3 2M39 205v-4M45 205l-3 1M39 208l-3 2M34 211l2 2M34 215v-4M39 215l3 1M45 218l3 1M51 221v-3M53 219l-2 2M51 215l-3 1M45 218l-3 1M42 216l-3 2M36 219v-3M36 213v-3M39 211v-3M42 210l-3 1M39 201l-3 2M36 200l3 1M34 205l-3 1M28 208l-3 2M22 211l3 2M22 215v-4M28 215l3 1M34 218l2 1M34 221l2 2M34 224v-3M39 224v-3M42 216v-3M45 215l-3 1M42 210l3 1M48 213l3 2M48 216l3 2M48 219v-3M56 221v-3M59 219l-3 2M56 215l-3 1M45 221l3 2M45 224v-3M51 224l2 2M56 228l3 1M56 231l3 2M56 234v-3M62 234v-3M62 228v-4M65 226v-3M68 224l-3 2M65 219l3 2M71 223l2 1M71 226l2 2M71 229v-3M79 231v-3M82 229l-3 2M79 224l3 2M85 228l3 1M90 231v-3M93 229l-3 2M90 224v-3M90 218v-3M93 216v-3M96 215l-3 1M93 210l-3 1M88 213l-3 2M85 211l-3 2M82 210l3 1M79 215v-4M79 208v-3M82 206v-3M85 205l-3 1M82 197l-3 1M79 195l3 2M73 201l3 2M73 205v-4M79 205v-4M82 197v-4M85 195l-3 2M82 190l3 2M88 193l2 2M88 197l2 1M88 200v-3M96 201v-3M99 200l-3 1M96 192l-3 1M93 190l3 2M90 195l3 2M96 201l3 2M96 205v-4M102 205l-3 1M96 208l-3 2M93 206l-3 2M90 205l3 1M85 211l3 2M90 215v-4M90 201l-2 2M88 200l2 1M79 208l-3 2M76 206l-3 2M73 205l3 1M71 210l2 1M76 213l3 2M76 216l3 2M76 219v-3M82 219l-3 2M76 223l-3 1M73 221l-2 2M71 219l2 2M65 226l3 2M65 229v-3M71 229l-3 2M65 233l-3 1M59 236l3 2M59 239v-3M65 239l3 2M71 242l2 2M71 246l2 1M71 249v-3M76 249v-3M76 242v-3M79 241v-3M82 239l-3 2M79 234l3 2M85 238l3 1M85 241l3 1M85 244v-3M93 246v-4M96 244l-3 2M93 236l-3 2M90 234l3 2M88 239l2 2M93 246l3 1M93 249v-3M99 249l-3 2M93 252l-3 2M90 251l-2 1M88 249l2 2M82 256l3 1M82 259v-3M88 259v-3M88 246l-3 1M85 244l3 2M82 249l-3 2M76 252l-3 2M71 256l2 1M71 259v-3M76 259v-3M76 252v-3M79 251v-4M79 244l3 2M85 247l3 2M85 251l3 1M85 254v-3M93 256v-4M96 254l-3 2M82 242l-3 2M76 246l3 1M82 249v-3M82 242v-3M85 241v-3M85 234l3 2M90 238l3 1M90 244v-3M99 246v-4M102 244l-3 2M99 239l-3 2M88 246l2 1M93 249l3 2M99 252l3 2M99 256l3 1M99 259v-3M105 259v-3M105 252v-3M107 251v-4M110 249l-3 2M107 244l3 2M113 247l3 2M113 251l3 1M113 254v-3M122 256v-4M124 254l-2 2M122 249l2 2M127 252l3 2M133 256v-4M136 254l-3 2M133 249v-3M133 242v-3M136 241v-3M139 239l-3 2M136 234l-3 2M130 238l-3 1M127 236l-3 2M124 234l3 2M122 239v-3M122 233v-4M124 231v-3M127 229l-3 2M124 221l-2 2M122 219l2 2M116 226l3 2M116 229v-3M122 229v-3M124 221v-3M127 219l-3 2M124 215l3 1M130 218l3 1M130 221l3 2M130 224v-3M139 226v-3M142 224l-3 2M139 219v-3M139 213v-3M139 206l-3 2M136 205l3 1M133 210l-3 1M127 213l-3 2M122 216l2 2M122 219v-3M127 219v-3M127 213v-3M130 211v-3M130 205l3 1M136 208l3 2M136 211l3 2M136 215v-4M144 216v-3M147 215l-3 1M144 210v-4M144 203v-3M144 197l-2 1M142 195l2 2M139 200l-3 1M133 203l-3 2M130 201l-3 2M127 200l3 1M124 205l3 1M130 211l3 2M130 215v-4M136 215l-3 1M130 218l-3 1M127 216l-3 2M119 221l3 2M119 224v-3M124 211l-2 2M122 210l2 1M119 215l-3 1M113 218l-3 1M110 216l-3 2M107 215l3 1M105 219l2 2M110 223l3 1M110 226l3 2M110 229v-3M116 229l-3 2M110 233l-3 1M107 231l-2 2M105 229l2 2M99 236l3 2M99 239v-3M105 239l-3 2M99 242l-3 2M99 249l3 2M105 252l2 2M105 256l2 1M110 259v-3M110 252v-3M113 251v-4M113 244l3 2M119 247l3 2M119 251l3 1M119 254v-3M127 256v-4M130 254l-3 2M127 246l-3 1M124 244l3 2M127 256l3 1M127 259v-3M133 259l-3 1M127 262l-3 2M124 260l-2 2M122 259l2 1M116 265l3 2M116 269v-4M122 269v-4M122 256l-3 1M116 259l-3 1M110 262l-3 2M105 265l2 2M105 269v-4M110 269v-4M110 262v-3M113 260v-3M113 254l3 2M119 257l3 2M119 260l3 2M119 264v-4M127 265v-3M130 264l-3 1M113 251l-3 1M107 254l3 2M113 260l3 2M113 264v-4M113 267l-3 2M110 265l-3 2M107 264l3 1M102 270l3 2M102 274v-4M107 274v-4M107 260l-2 2M105 259l2 1M102 264l-3 1M96 267l-3 2M93 265l-3 2M90 264l3 1M88 269l2 1M93 272l3 2M93 275l3 2M93 279v-4M99 279l-3 1M93 282l-3 1M90 280l-2 2M88 279l2 1M82 285l3 2M82 288v-3M88 288l-3 2M82 292l-3 1M76 295l3 2M76 298v-3M82 298l3 2M88 302l2 1M88 305l2 1M88 308v-3M93 308v-3M93 302v-4M96 300v-3M99 298l-3 2M96 293l3 2M102 297l3 1M102 300l3 2M102 303v-3M110 305v-3M113 303l-3 2M110 295l-3 2M107 293l3 2M105 298l2 2M110 305l3 1M110 308v-3M116 308l-3 2M110 311l-3 2M107 310l-2 1M105 308l2 2M99 315l3 1M99 318v-3M105 318l-3 2M99 321l-3 2M93 324l3 2M93 328v-4M99 328l3 1M105 331l2 2M110 334v-3M113 333l-3 1M110 328l-3 1M105 331l-3 2M102 329l-3 2M96 333v-4M96 326v-3M99 324v-3M102 323l-3 1M99 315l-3 1M96 313l3 2M93 318l-3 2M88 321l-3 2M82 324l3 2M82 328v-4M88 328l2 1M93 331l3 2M93 334l3 2M93 338v-4M99 338v-4M102 329v-3M105 328l-3 1M102 323l3 1M107 326l3 2M107 329l3 2M107 333v-4M116 334v-3M119 333l-3 1M116 328l-3 1M105 334l2 2M105 338v-4M110 338l3 1M116 341l3 2M116 344l3 2M116 347v-3M122 347v-3M122 341v-3M124 339v-3M127 338l-3 1M124 333l3 1M130 336l3 2M130 339l3 2M130 343v-4M139 344v-3M142 343l-3 1M139 338l3 1M144 341l3 2M150 344v-3M153 343l-3 1M150 338v-4M150 331v-3M153 329v-3M156 328l-3 1M153 323l-3 1M147 326l-3 2M144 324l-2 2M142 323l2 1M139 328v-4M139 321v-3M142 320v-4M144 318l-2 2M142 310l-3 1M139 308l3 2M133 315l3 1M133 318v-3M139 318v-3M142 310v-4M144 308l-2 2M142 303l2 2M147 306l3 2M147 310l3 1M147 313v-3M156 315v-4M159 313l-3 2M156 305l-3 1M153 303l3 2M150 308l3 2M156 315l3 1M156 318v-3M161 318l-2 2M156 321l-3 2M153 320l-3 1M150 318l3 2M144 324l3 2M150 328v-4M150 315l-3 1M147 313l3 2M139 321l-3 2M136 320l-3 1M133 318l3 2M130 323l3 1M136 326l3 2M136 329l3 2M136 333v-4M142 333l-3 1M136 336l-3 2M133 334l-3 2M130 333l3 1M124 339l3 2M124 343v-4M130 343l-3 1M124 346l-2 1M119 349l3 2M119 352v-3M124 352l3 2M130 356l3 1M130 359l3 2M130 362v-3M136 362v-3M136 356v-4M139 354v-3M142 352l-3 2M139 347l3 2M144 351l3 1M144 354l3 2M144 357v-3M153 359v-3M156 357l-3 2M153 349l-3 2M150 347l3 2M147 352l3 2M153 359l3 2M153 362v-3M159 362l-3 2M153 365l-3 2M150 364l-3 1M147 362l3 2M142 369l2 1M142 372v-3M147 372l-3 2M142 375l-3 2M136 379l3 1M136 382v-3M142 382l2 2M147 385l3 2M153 388v-3M156 387l-3 1M153 382l-3 2M147 385l-3 2M144 384l-2 1M139 387v-3M139 380v-3M142 379v-4M144 377l-2 2M142 369l-3 1M139 367l3 2M136 372l-3 2M130 375l-3 2M124 379l3 1M124 382v-3M130 382l3 2M136 385l3 2M142 388v-3M144 387l-2 1M142 382l-3 2M136 385l-3 2M133 384l-3 1M127 387v-3M127 380v-3M130 379v-4M133 377l-3 2M130 369l-3 1M127 367l3 2M124 372l3 2M136 379v-4M136 372v-3M136 365v-3M139 364v-3M142 362l-3 2M139 357l-3 2M130 359l-3 2M127 357l3 2M124 362v-3M124 356v-4M127 354v-3M130 352l-3 2M124 343l3 1M122 334l-3 2M119 333l3 1M116 338l-3 1M110 341l-3 2M107 339l-2 2M105 338l2 1M102 343l3 1M107 346l3 1M107 349l3 2M107 352v-3M113 352l-3 2M107 356l-2 1M105 354l-3 2M102 352l3 2M96 359l3 2M96 362v-3M105 364v-3M107 362l-2 2M105 357l-3 2M96 359l-3 2M93 357l3 2M90 362v-3M90 356v-4M93 354v-3M96 352l-3 2M93 344l-3 2M90 343l3 1M88 347l-3 2M82 351l-3 1M76 354l3 2M76 357v-3M82 357l3 2M88 361l2 1M93 364v-3M96 362l-3 2M93 357l-3 2M88 361l-3 1M85 359l-3 2M79 362v-3M79 356v-4M82 354v-3M85 352l-3 2M82 344l-3 2M79 343l3 1M76 347l-3 2M71 351l-3 1M65 354l3 2M65 357v-3M71 357l2 2M76 361l3 1M76 364l3 1M76 367v-3M82 367v-3M85 359v-3M88 357l-3 2M85 352l3 2M90 356l3 1M90 359l3 2M99 364v-3M102 362l-3 2M88 364l2 1M88 367v-3M93 367l3 2M99 370l3 2M99 374l3 1M99 377v-3M105 377v-3M105 370v-3M107 369v-4M110 367l-3 2M107 362l3 2M113 365l3 2M113 369l3 1M113 372v-3M122 374v-4M124 372l-2 2M122 367l2 2M127 370l3 2M133 374v-4M133 367v-3M133 361v-4M136 352l-3 2M130 356l-3 1M127 354l-3 2M122 357v-3M122 351v-4M124 349v-3M127 347l-3 2M124 339l-2 2M139 338l-3 1M127 344l3 2M133 347l3 2M144 354v-3M144 347l-2 2M139 351l-3 1M136 349l-3 2M130 352v-3M130 346v-3M133 344v-3M136 343l-3 1M133 357v-3M136 349v-3M139 347l-3 2M142 346l2 1M142 352v-3M150 354v-3M153 352l-3 2M150 347l-3 2M139 354l3 2M139 357v-3M144 357l3 2M150 361l3 1M150 364l3 1M156 367v-3M156 361v-4M159 359v-3M161 357l-2 2M159 352l2 2M164 356l3 1M164 359l3 2M164 362v-3M173 364v-3M176 362l-3 2M173 357l3 2M178 361l3 1M184 364v-3M187 362l-3 2M184 357v-3M184 351v-4M187 349v-3M190 347l-3 2M187 343l-3 1M181 346l-3 1M178 344l-2 2M176 343l2 1M173 347v-3M173 341v-3M176 339v-3M178 338l-2 1M176 329l-3 2M173 328l3 1M167 334l3 2M167 338v-4M173 338v-4M176 329v-3M178 328l-2 1M176 323l2 1M181 326l3 2M181 329l3 2M181 333v-4M190 334v-3M193 333l-3 1M190 328l3 1M196 331l2 2M201 334v-3M204 333l-3 1M201 328v-4M201 321v-3M201 315l-3 1M198 313l3 2M196 318l2 2M201 321l3 2M201 324l3 2M207 328l-3 1M201 331l-3 2M198 329l-2 2M196 328l2 1M190 334l3 2M190 338v-4M196 338l2 1M201 341l3 2M207 344v-3M210 343l-3 1M207 338v-4M207 331v-3M210 329v-3M213 328l-3 1M210 323l-3 1M201 324l-3 2M198 323l3 1M196 328v-4M196 321v-3M198 320v-4M201 318l-3 2M198 310l-2 1M196 308l2 2M193 313l3 2M204 320v-4M207 318l-3 2M204 313v-3M204 306v-3M207 305v-3M210 303l-3 2M207 298l-3 2M201 302l-3 1M198 300l-2 2M196 298l2 2M193 303v-3M193 297v-4M196 295v-3M198 293l-2 2M196 285l-3 2M193 283l3 2M190 288v-3M190 282v-3M190 275l-3 2M187 274l3 1M184 279l-3 1M178 282l-2 1M176 280l-3 2M173 279l3 1M170 283l3 2M176 287l2 1M176 290l2 2M176 293v-3M181 293l-3 2M176 297l-3 1M173 295l-3 2M170 293l3 2M164 300l3 2M164 303v-3M173 305v-3M176 303l-3 2M173 298l-3 2M164 300l-3 2M161 298l3 2M159 303v-3M159 297v-4M161 295v-3M164 293l-3 2M161 285l-2 2M159 283l2 2M153 290l3 2M153 293v-3M159 293v-3M161 285v-3M164 283l-3 2M161 279l3 1M167 282l3 1M167 285l3 2M167 288v-3M176 290v-3M176 283l-3 2M164 290l3 2M164 293v-3M176 297l2 1M176 300l2 2M176 303v-3M181 303v-3M181 297v-4M184 295v-3M187 293l-3 2M184 288l3 2M190 292l3 1M190 295l3 2M190 298v-3M198 300v-3M201 298l-3 2M198 293l3 2M204 297l3 1M210 300v-3M213 298l-3 2M210 293v-3M210 287v-4M213 285v-3M215 283l-2 2M213 279l-3 1M207 282l-3 1M204 280l-3 2M201 279l3 1M198 283v-3M198 277v-3M201 275v-3M204 274l-3 1M201 265l-3 2M198 264l3 1M193 270l3 2M193 274v-4M198 274v-4M201 265v-3M204 264l-3 1M201 259l3 1M207 262l3 2M207 265l3 2M207 269v-4M215 270v-3M218 269l-3 1M215 260l-2 2M213 259l2 1M210 264l3 1M215 270l3 2M215 274v-4M221 274l-3 1M215 277l-2 2M213 275l-3 2M210 274l3 1M204 280l3 2M210 283v-3M210 270l-3 2M207 269l3 1M198 277l-2 2M196 275l-3 2M193 274l3 1M190 279l3 1M196 282l2 1M196 285l2 2M201 288l-3 2M196 292l-3 1M193 290l-3 2M190 288l3 2M184 295l3 2M184 298v-3M190 298l-3 2M184 302l-3 1M178 305l3 1M178 308v-3M184 308l3 2M190 311l3 2M190 315l3 1M190 318v-3M196 318v-3M198 310v-4M201 308l-3 2M198 303l3 2M204 306l3 2M204 310l3 1M213 315v-4M215 313l-2 2M213 305l-3 1M210 303l3 2M207 308l3 2M213 315l2 1M213 318v-3M218 318l-3 2M213 321l-3 2M210 320l-3 1M207 318l3 2M207 328v-4M207 315l-3 1M204 313l3 2M196 321l-3 2M190 324l3 2M190 328v-4M204 320l3 1M204 323v-3M213 324v-3M215 323l-2 1M201 311l-3 2M198 323v-3M196 324l-3 2M193 323l3 1M187 329l3 2M187 333v-4M193 333v-4M193 320l-3 1M190 318l3 2M187 323l-3 1M181 326l-3 2M178 324l-2 2M178 331l3 2M178 334l3 2M178 338v-4M184 338l-3 1M178 341l-2 2M176 339l-3 2M167 344l3 2M167 347v-3M173 347l-3 2M167 351l-3 1M161 357v-3M167 357l3 2M173 364l3 1M173 367v-3M178 367v-3M178 361v-4M181 359v-3M184 357l-3 2M181 352l3 2M187 356l3 1M187 359l3 2M187 362v-3M196 364v-3M198 362l-2 2M196 354l-3 2M193 352l3 2M190 357l3 2M196 364l2 1M196 367v-3M201 367l-3 2M196 370l-3 2M193 369l-3 1M190 367l3 2M184 374l3 1M184 377v-3M190 377l-3 2M184 380l-3 2M178 384l3 1M178 387v-3M184 387l3 1M190 390l3 2M196 393v-3M198 392l-2 1M196 387l-3 1M190 390l-3 2M187 388l-3 2M181 392v-4M181 385v-3M184 384v-4M187 382l-3 2M184 374l-3 1M181 372l3 2M178 377l-2 2M173 380l-3 2M167 384l3 1M167 387v-3M173 387l3 1M178 390l3 2M178 393l3 2M178 397v-4M184 397v-4M187 388v-3M190 387l-3 1M187 382l3 2M193 385l3 2M193 388l3 2M193 392v-4M201 393v-3M204 392l-3 1M201 387l-3 1M190 393l3 2M190 397v-4M196 397l2 1M201 400l3 2M201 403l3 2M201 407v-4M207 407v-4M207 400v-3M210 398v-3M213 397l-3 1M210 392l3 1M215 395l3 2M215 398l3 2M215 402v-4M224 403v-3M227 402l-3 1M224 397l3 1M230 400l2 2M235 403v-3M238 402l-3 1M235 397v-4M235 390v-3M238 388v-3M241 387l-3 1M238 382l-3 2M232 385l-2 2M230 384l-3 1M227 382l3 2M224 387v-3M224 380v-3M227 379v-4M230 377l-3 2M227 369l-3 1M224 367l3 2M218 374l3 1M218 377v-3M224 377v-3M227 369v-4M230 367l-3 2M227 362l3 2M232 365l3 2M232 369l3 1M232 372v-3M241 374v-4M244 372l-3 2M241 364l-3 1M238 362l3 2M235 367l3 2M241 374l3 1M241 377v-3M247 377l-3 2M241 380l-3 2M238 379l-3 1M235 377l3 2M230 384l2 1M235 387v-3M235 374l-3 1M232 372l3 2M224 380l-3 2M221 379l-3 1M218 377l3 2M215 382l3 2M221 385l3 2M221 388l3 2M221 392v-4M227 392l-3 1M221 395l-3 2M218 393l-3 2M215 392l3 1M210 398l3 2M210 402v-4M215 402l-2 1M210 405l-3 2M204 408l3 2M204 411v-3M210 411l3 2M215 415l3 1M215 418l3 2M215 421v-3M221 421v-3M221 415v-4M224 413v-3M227 411l-3 2M224 406l3 2M230 410l2 1M230 413l2 2M230 416v-3M238 418v-3M241 416l-3 2M238 408l-3 2M235 406l3 2M232 411l3 2M238 418l3 2M238 421v-3M244 421l-3 2M238 425l-3 1M235 423l-3 2M232 421l3 2M227 428l3 1M227 431v-3M232 431v-3M232 418l-2 2M230 416l2 2M227 421l-3 2M221 425l-3 1M215 428l3 1M215 431v-3M221 431v-3M221 425v-4M224 423v-3M224 416l3 2M230 420l2 1M230 423l2 2M230 426v-3M238 428v-3M241 426l-3 2M227 415l-3 1M221 418l3 2M227 421v-3M227 415v-4M230 413v-3M230 406l2 2M235 410l3 1M235 416v-3M244 418v-3M247 416l-3 2M244 411l-3 2M232 418l3 2M238 421l3 2M244 425l3 1M244 428l3 1M244 431v-3M250 431v-3M250 425v-4M252 423v-3M255 421l-3 2M252 416l3 2M258 420l3 1M258 423l3 2M258 426v-3M267 428v-3M269 426l-2 2M267 421l2 2M272 425l3 1M278 428v-3M281 426l-3 2M278 421v-3M278 415v-4M281 413v-3M284 411l-3 2M281 406l-3 2M275 410l-3 1M272 408l-3 2M269 406l3 2M267 411v-3M267 405v-3M269 403v-3M272 402l-3 1M269 393l-2 2M267 392l2 1M261 398l3 2M261 402v-4M267 402v-4M269 393v-3M272 392l-3 1M269 387l3 1M275 390l3 2M275 393l3 2M275 397v-4M284 398v-3M286 397l-2 1M284 392v-4M284 385v-3M284 379l-3 1M281 377l3 2M278 382l-3 2M272 385l-3 2M267 388l2 2M267 392v-4M272 392v-4M272 385v-3M275 384v-4M275 377l3 2M281 380l3 2M281 384l3 1M281 387v-3M289 388v-3M292 387l-3 1M289 382v-3M289 375v-3M289 369l-3 1M286 367l3 2M284 372l-3 2M278 375l-3 2M272 379l3 1M272 382v-3M278 382v-3M278 375v-3M281 374v-4M281 367l3 2M286 370l3 2M286 374l3 1M286 377v-3M295 379v-4M298 377l-3 2M295 372l-3 2M284 379l2 1M289 382l3 2M295 385l3 2M295 388l3 2M295 392v-4M301 392v-4M301 385v-3M304 384v-4M306 382l-2 2M304 377l2 2M309 380l3 2M309 384l3 1M309 387v-3M318 388v-3M321 387l-3 1M318 382l3 2M323 385l3 2M329 388v-3M332 387l-3 1M329 382v-3M329 375v-3M332 374v-4M335 372l-3 2M332 367l-3 2M326 370l-3 2M323 369l-2 1M321 367l2 2M318 372v-3M318 365v-3M321 364v-3M323 362l-2 2M321 354l-3 2M318 352l3 2M312 359l3 2M312 362v-3M318 362v-3M321 354v-3M323 352l-2 2M321 347l2 2M326 351l3 1M326 354l3 2M326 357v-3M335 359v-3M338 357l-3 2M335 352l-3 2M323 359l3 2M323 362v-3M329 362l3 2M335 365l3 2M340 369v-4M343 367l-3 2M340 362l-2 2M335 365l-3 2M332 364l-3 1M326 367v-3M326 361v-4M329 359v-3M332 357l-3 2M329 349l-3 2M326 347l3 2M323 365l3 2M323 369l3 1M329 372v-3M332 364v-3M335 362l-3 2M338 361l2 1M338 364l2 1M338 367v-3M346 369v-4M349 367l-3 2M346 362l-3 2M335 369l3 1M335 372v-3M340 372l3 2M346 375l3 2M346 379l3 1M346 382v-3M352 382v-3M352 375v-3M355 374v-4M358 372l-3 2M355 367l3 2M360 370l3 2M360 374l3 1M360 377v-3M369 379v-4M372 377l-3 2M369 372l3 2M375 375l2 2M380 379v-4M383 377l-3 2M380 372v-3M380 365v-3M383 364v-3M386 362l-3 2M383 357l-3 2M377 361l-2 1M375 359l-3 2M372 357l3 2M369 362v-3M369 356v-4M372 354v-3M375 352l-3 2M372 344l-3 2M369 343l3 1M363 349l3 2M363 352v-3M369 352v-3M372 344v-3M375 343l-3 1M372 338l3 1M377 341l3 2M377 344l3 2M377 347v-3M386 349v-3M389 347l-3 2M386 343l3 1M392 346l2 1M397 349v-3M400 347l-3 2M397 343v-4M397 336v-3M397 329l-3 2M394 328l3 1M392 333l2 1M397 336l3 2M397 339l3 2M403 343l-3 1M397 346l-3 1M394 344l-2 2M392 343l2 1M386 349l3 2M386 352v-3M392 352l2 2M397 356l3 1M403 359v-3M406 357l-3 2M403 352v-3M403 346v-3M406 344v-3M409 343l-3 1M406 338l-3 1M397 339l-3 2M394 338l3 1M392 343v-4M392 336v-3M394 334v-3M397 333l-3 1M394 324l-2 2M392 323l2 1M389 328l3 1M400 334v-3M403 333l-3 1M400 328v-4M400 321v-3M403 320v-4M406 318l-3 2M403 313l-3 2M397 316l-3 2M394 315l-2 1M392 313l2 2M389 318v-3M389 311v-3M392 310v-4M394 308l-2 2M392 300l-3 1M389 298l3 2M386 303v-3M386 297v-4M386 290l-3 2M383 288l3 2M380 293l-3 2M375 297l-3 1M372 295l-3 2M369 293l3 2M366 298l3 2M372 301l3 2M372 305l3 1M372 308v-3M377 308l-2 2M372 311l-3 2M369 310l-3 1M366 308l3 2M360 315l3 1M360 318v-3M369 320v-4M372 318l-3 2M369 313l-3 2M360 315l-2 1M358 313l2 2M355 318v-3M355 311v-3M358 310v-4M360 308l-2 2M358 300l-3 1M355 298l3 2M349 305l3 1M349 308v-3M355 308v-3M358 300v-3M360 298l-2 2M358 293l2 2M363 297l3 1M363 300l3 1M363 303v-3M372 305v-4M372 298l-3 2M360 305l3 1M360 308v-3M372 311l3 2M372 315l3 1M372 318v-3M377 318v-3M377 311v-3M380 310v-4M383 308l-3 2M380 303l3 2M386 306l3 2M386 310l3 1M386 313v-3M394 315v-4M397 313l-3 2M394 308l3 2M400 311l3 2M406 315v-4M409 313l-3 2M406 308v-3M406 301v-3M409 300v-3M411 298l-2 2M409 293l-3 2M403 297l-3 1M400 295l-3 2M397 293l3 2M394 298v-3M394 292v-4M397 290v-3M400 288l-3 2M397 280l-3 2M394 279l3 1M389 285l3 2M389 288v-3M394 288v-3M397 280v-3M400 279l-3 1M397 274l3 1M403 277l3 2M403 280l3 2M403 283v-3M411 285v-3M414 283l-3 2M411 279v-4M411 272v-3M411 265l-2 2M409 264l2 1M406 269l-3 1M400 272l-3 2M394 275l3 2M394 279v-4M400 279v-4M400 272v-3M403 270v-3M403 264l3 1M409 267l2 2M409 270l2 2M409 274v-4M417 275v-3M420 274l-3 1M417 269v-4M417 262v-3M417 256l-3 1M414 254l3 2M411 259l-2 1M406 262l-3 2M400 265l3 2M400 269v-4M406 269v-4M406 262v-3M409 260v-3M409 254l2 2M414 257l3 2M414 260l3 2M414 264v-4M423 265v-3M426 264l-3 1M423 259l-3 1M411 265l3 2M417 269l3 1M423 272l3 2M423 275l3 2M423 279v-4M429 279v-4M429 272v-3M431 270v-3M434 269l-3 1M431 264l3 1M437 267l3 2M437 270l3 2M437 274v-4M446 275v-3M448 274l-2 1M446 269l2 1M451 272l3 2M457 275v-3M460 274l-3 1M457 269v-4M457 262v-3M460 260v-3M463 259l-3 1M460 254l-3 2M454 257l-3 2M451 256l-3 1M448 254l3 2M446 259v-3M446 252v-3M448 251v-4M451 249l-3 2M448 241l-2 1M446 239l2 2M440 246l3 1M440 249v-3M446 249v-3M448 241v-3M451 239l-3 2M448 234l3 2M454 238l3 1M454 241l3 1M454 244v-3M463 246v-4M465 244l-2 2M463 239v-3M463 233v-4M463 226l-3 2M460 224l3 2M457 229l-3 2M451 233l-3 1M446 236l2 2M446 239v-3M451 239v-3M451 233v-4M454 231v-3M454 224l3 2M460 228l3 1M460 231l3 2M460 234v-3M468 236v-3M471 234l-3 2M468 229v-3M468 223v-4M468 216l-3 2M465 215l3 1M463 219l-3 2M457 223l-3 1M465 231v-3M468 229l-3 2M465 224v-3M465 211l-2 2M463 210l2 1M460 215l3 1M465 218l3 1M465 221l3 2M471 224l-3 2M465 228l-2 1M454 231l3 2M454 234v-3M460 234l3 2M465 238l3 1M471 241v-3M474 239l-3 2M471 234v-3M471 228v-4M471 221l-3 2M468 219l3 2M465 224l3 2M471 228l3 1M471 231l3 2M477 234l-3 2M471 238l-3 1M468 236l-3 2M460 241l3 1M460 244v-3M465 244v-3M465 231l-2 2M460 234l-3 2M454 238l-3 1M451 236l-3 2M451 242l3 2M451 246l3 1M451 249v-3M457 249l-3 2M451 252l-3 2M448 251l-2 1M440 256l3 1M440 259v-3M446 259l-3 1M440 262l-3 2M434 269v-4M440 269l3 1M446 275l2 2M446 279v-4M451 279v-4M451 272v-3M454 270v-3M457 269l-3 1M454 264l3 1M460 267l3 2M460 270l3 2M460 274v-4M468 275v-3M471 274l-3 1M468 265l-3 2M465 264l3 1M463 269l2 1M468 275l3 2M468 279v-4M474 279l-3 1M468 282l-3 1M465 280l-2 2M463 279l2 1M457 285l3 2M457 288v-3M463 288l2 2M468 292l3 1M474 295v-3M477 293l-3 2M474 288v-3M474 282v-3M474 275l-3 2M471 274l3 1M468 279l3 1M474 282l3 1M474 285l3 2M480 288l-3 2M474 292l-3 1M471 290l-3 2M468 288l3 2M463 295l2 2M463 298v-3M468 298l3 2M474 301l3 2M480 305v-4M483 303l-3 2M480 298v-3M480 292v-4M480 285l-3 2M477 283l3 2M474 288l3 2M480 292l3 1M480 295l3 2M485 298l-2 2M480 301l-3 2M477 300l-3 1M474 298l3 2M468 305l3 1M468 308v-3M474 308v-3M474 295l-3 2M468 298l-3 2M463 301l-3 2M460 300l-3 1M457 298l3 2M454 303l3 2M460 306l3 2M460 310l3 1M460 313v-3M465 313l-2 2M460 316l-3 2M457 315l-3 1M454 313l3 2M448 320l3 1M448 323v-3M454 323l-3 1M448 326l-2 2M443 329l3 2M443 333v-4M448 333l3 1M454 336l3 2M454 339l3 2M454 343v-4M460 343v-4M460 336v-3M463 334v-3M465 333l-2 1M463 328l2 1M468 331l3 2M468 334l3 2M468 338v-4M477 339v-3M480 338l-3 1M477 329l-3 2M474 328l3 1M471 333l3 1M477 339l3 2M477 343v-4M483 343l-3 1M477 346l-3 1M474 344l-3 2M471 343l3 1M465 349l3 2M465 352v-3M471 352v-3M471 339l-3 2M468 338l3 1M465 343l-2 1M460 346l-3 1M454 349l3 2M454 352v-3M460 352v-3M460 346v-3M463 344v-3M463 338l2 1M468 341l3 2M468 344l3 2M468 347v-3M477 349v-3M480 347l-3 2M465 336l-2 2M463 334l-3 2M457 338l3 1M463 344l2 2M463 347v-3M463 351l-3 1M460 349l-3 2M457 347l3 2M451 354l3 2M451 357v-3M457 357v-3M457 344l-3 2M454 343l3 1M451 347l-3 2M446 351l-3 1M443 349l-3 2M440 347l3 2M437 352l3 2M443 356l3 1M443 359l3 2M443 362v-3M448 362l-2 2M443 365l-3 2M440 364l-3 1M437 362l3 2M431 369l3 1M431 372v-3M437 372l-3 2M431 375l-2 2M426 379l3 1M426 382v-3M431 382l3 2M437 385l3 2M437 388l3 2M437 392v-4M443 392v-4M443 385v-3M446 384v-4M448 382l-2 2M446 377l2 2M451 380l3 2M451 384l3 1M451 387v-3M460 388v-3M463 387l-3 1M460 379l-3 1M457 377l3 2M454 382l3 2M460 388l3 2M460 392v-4M465 392l-2 1M460 395l-3 2M457 393l-3 2M454 392l3 1M448 398l3 2M448 402v-4M454 402l-3 1M448 405l-2 1M443 408l3 2M443 411v-3M448 411l3 2M454 415l3 1M460 418v-3M463 416l-3 2M460 411l-3 2M454 415l-3 1M451 413l-3 2M446 416v-3M446 410v-4M448 408v-3M451 406l-3 2M448 398l-2 2M446 397l2 1M443 402l-3 1M437 405l-3 1M431 408l3 2M431 411v-3M437 411l3 2M443 415l3 1M443 418l3 2M443 421v-3M448 421v-3M451 413v-3M454 411l-3 2M451 406l3 2M457 410l3 1M457 413l3 2M457 416v-3M465 418v-3M468 416l-3 2M465 411l-2 2M454 418l3 2M454 421v-3M460 421l3 2M465 425l3 1M465 428l3 1M465 431v-3M471 431v-3M471 425v-4M474 423v-3M477 421l-3 2M474 416l3 2M480 420l3 1M480 423l3 2M480 426v-3M488 428v-3M491 426l-3 2M488 421l3 2M494 425l3 1M500 428v-3M502 426l-2 2M500 421v-3M500 415v-4M502 413v-3M505 411l-3 2M502 406l-2 2M497 410l-3 1M494 408l-3 2M491 406l3 2M488 411v-3M488 405v-3M491 403v-3M494 402l-3 1M491 393l-3 2M488 392l3 1M483 398l2 2M483 402v-4M488 402v-4M491 393v-3M494 392l-3 1M491 387l3 1M497 390l3 2M497 393l3 2M497 397v-4M505 398v-3M508 397l-3 1M505 388l-3 2M502 387l3 1M500 392l2 1M505 398l3 2M505 402v-4M511 402l-3 1M505 405l-3 1M502 403l-2 2M500 402l2 1M494 408l3 2M500 411v-3M500 398l-3 2M497 397l3 1M488 405l-3 1M485 403l-2 2M483 402l2 1M480 406l3 2M485 410l3 1M485 413l3 2M485 416v-3M491 416l-3 2M485 420l-2 1M483 418l-3 2M480 416l3 2M474 423l3 2M474 426v-3M480 426l-3 2M474 429l-3 2M468 433l3 1M468 436v-3M474 436l3 2M480 439l3 2M480 443l3 1M480 446v-3M485 446v-3M485 439v-3M488 438v-4M491 436l-3 2M488 431l3 2M494 434l3 2M494 438l3 1M494 441v-3M502 443v-4M505 441l-3 2M502 433l-2 1M500 431l2 2M497 436l3 2M502 443l3 1M502 446v-3M508 446l-3 2M502 449l-2 2M500 448l-3 1M497 446l3 2M491 452l3 2M491 456v-4M497 456l3 1M502 459l3 2M508 462v-3M511 461l-3 1M508 456v-4M508 449v-3M508 443l-3 1M505 441l3 2M502 446l3 2M508 449l3 2M508 452l3 2M514 456l-3 1M508 459l-3 2M505 457l-3 2M502 456l3 1M497 462l3 2M497 466v-4M502 466l3 1M508 469l3 1M514 472v-3M517 470l-3 2M514 466v-4M514 459v-3M514 452l-3 2M511 451l3 1M508 456l3 1M514 459l3 2M514 462l3 2M519 466l-2 1M514 469l-3 1M511 467l-3 2M508 466l3 1M502 472l3 2M502 475v-3M508 475v-3M508 462l-3 2M502 466l-2 1M497 469l-3 1M494 467l-3 2M491 466l3 1M488 470l3 2M494 474l3 1M494 477l3 2M494 480v-3M500 480l-3 2M494 484l-3 1M491 482l-3 2M488 480l3 2M483 487l2 2M483 490v-3M488 490l-3 2M483 493l-3 2M477 497l3 1M477 500v-3M483 500l2 2M488 503l3 2M488 507l3 1M488 510v-3M494 510v-3M494 503v-3M497 502v-4M500 500l-3 2M497 495l3 2M502 498l3 2M502 502l3 1M502 505v-3M511 507v-4M514 505l-3 2M511 497l-3 1M508 495l3 2M505 500l3 2M511 507l3 1M511 510v-3M517 510l-3 1M511 513l-3 2M508 511l-3 2M505 510l3 1M500 516l2 2M500 520v-4M505 520l3 1M511 523l3 2M517 526v-3M519 525l-2 1M517 520v-4M517 513v-3M517 507l-3 1M514 505l3 2M511 510l3 1M517 513l2 2M517 516l2 2M522 520l-3 1M517 523l-3 2M514 521l-3 2M511 520l3 1M505 526l3 2M505 530v-4M511 530l3 1M517 533l2 1M522 536v-3M525 534l-3 2M522 530v-4M522 523v-3"/>
<path stroke="#000" d="M71 88l-3 2M71 98l2 2M68 103l-3 2M59 108l3 2M65 98l-3 2M51 103l-3 2M51 113l2 1M48 118l-3 1M39 123l3 1M34 133l2 1M45 142l3 2M53 137v-3M59 137l3 2M68 142v-3M68 133l-3 1M71 141l-3 1l3 2M65 147l-3 2M56 152l3 2M62 142l-3 2M45 152l3 2M53 147v-3M62 149l-3 2M59 147l3 2M68 152v-3M68 136v-3M65 134v-3M65 134l-3 2M51 139v-3M53 137l-2 2M53 147l3 2M51 155v-3l-3 2l-3 1M42 157l3 2M48 147l-3 2M34 152l-3 2M34 162l2 2M31 167l-3 2M22 172l3 2M17 182l2 1M28 192l3 1M36 187v-4M42 187l3 1M51 192v-4M51 182l-3 1M53 190l-2 2l2 1M48 197l-3 1M39 201l3 2M34 211l2 2M51 221v-3M42 216l-3 2M39 211v-3M39 205v-4l-3 2M22 211l3 2M34 221l2 2M42 216v-3M51 215l-3 1l3 2l2 1M56 221v-3M45 221l3 2M56 231l3 2M65 226v-3M71 226l2 2M79 231v-3M90 231v-3M93 216v-3M85 211l-3 2M82 206v-3M82 197l-3 1M73 201l3 2M79 195l3 2v-4M88 197l2 1M96 201v-3M96 192l-3 1M99 200l-3 1l3 2M93 206l-3 2M88 213l-3 2M85 211l3 2M90 201l-2 2M76 206l-3 2M76 216l3 2M73 221l-2 2M68 224l-3 2l3 2M59 236l3 2M71 246l2 1M79 241v-3M85 241l3 1M93 246v-4M93 236l-3 2M96 244l-3 2l3 1M90 251l-2 1M82 256l3 1M88 246l-3 1M71 256l2 1M79 251v-4M88 252l-3 2M85 251l3 1M93 256v-4M93 239v-3M90 238v-4M90 238l-2 1M76 246l3 1l3 2M85 238l3 1M85 241v-3M99 246v-4M88 246l2 1M99 256l3 1M107 251v-4M113 251l3 1M122 256v-4M133 256v-4M136 241v-3M127 236l-3 2M124 231v-3M124 221l-2 2M116 226l3 2M122 219l2 2v-3M130 221l3 2M139 226v-3M139 206l-3 2M122 216l2 2l3 1M130 211v-3M136 211l3 2M144 216v-3M144 197l-2 1M130 201l-3 2M130 211l3 2M127 219v-3M124 218v-3M127 216l-3 2l-2 1M122 223l-3 1M119 221l3 2M124 211l-2 2M110 216l-3 2M110 226l3 2M107 231l-2 2M99 236l3 2M96 247l-3 2M96 247l3 2M105 256l2 1M113 247l3 2M113 251v-4M119 251l3 1l2 2M127 252l3 2M127 256v-4M127 246l-3 1M124 251l3 1M130 254l-3 2l3 1M124 260l-2 2M116 265l3 2M122 256l-3 1M105 265l2 2M113 260v-3M122 262l-3 2M119 260l3 2M127 265v-3M127 249v-3M124 247v-3M124 247l-2 2M113 254v-3M110 252v-3M113 251l-3 1M113 260l3 2M110 269v-4l-3 2l-2 2M102 270l3 2M107 260l-2 2M93 265l-3 2M93 275l3 2M90 280l-2 2M82 285l3 2M76 295l3 2M88 305l2 1M96 300v-3M102 300l3 2M110 305v-3M110 295l-3 2M113 303l-3 2l3 1M107 310l-2 1M99 315l3 1M93 324l3 2M110 334v-3M102 329l-3 2M99 324v-3M99 318v-3l-3 1M82 324l3 2M93 334l3 2M102 329v-3M110 328l-3 1l3 2l3 2M116 334v-3M105 334l2 2M116 344l3 2M124 339v-3M130 339l3 2M139 344v-3M150 344v-3M153 329v-3M144 324l-2 2M142 320v-4M142 310l-3 1M133 315l3 1M139 308l3 2v-4M147 310l3 1M156 315v-4M156 305l-3 1M159 313l-3 2l3 1M153 320l-3 1M147 326l-3 2M144 324l3 2M150 315l-3 1M136 320l-3 1M136 329l3 2M133 334l-3 2M127 338l-3 1l3 2M119 349l3 2M130 359l3 2M139 354v-3M144 354l3 2M153 359v-3M153 349l-3 2M156 357l-3 2l3 2M150 364l-3 1M142 369l2 1M136 379l3 1M153 388v-3M144 384l-2 1M142 379v-4M142 372v-3l-3 1M124 379l3 1M142 388v-3v-3M133 384l-3 1M130 379v-4M130 369l-3 1M136 379v-4M139 364v-3M130 362v-3l-3 2M124 352l3 2v-3M124 346l-2 1M122 344v-3M122 334l-3 2M107 339l-2 2M107 349l3 2M105 354l-3 2M96 359l3 2M105 364v-3M96 362v-3l-3 2M93 354v-3M93 344l-3 2M76 354l3 2M93 364v-3v-4M85 359l-3 2M82 354v-3M82 344l-3 2M65 354l3 2M76 364l3 1M85 359v-3M93 357l-3 2M93 361l-3 1M90 359l3 2l3 1M99 361l3 1M99 364v-3M88 364l2 1M99 374l3 1M107 369v-4M113 369l3 1M122 374v-4M133 374v-4M136 356v-4M124 356v-4M127 354l-3 2M124 349v-3v-3v-4l-2 2M119 343l-3 1M119 346l-3 1M119 346l3 1M124 336l3 2M124 336v-3M127 334l3 2M133 338l-3 1M133 341l-3 2M133 341l3 2l3 1M139 341l3 2M139 341v-3M130 343l-3 1l3 2M144 351l3 1M144 354v-3M136 349l-3 2M133 344v-3M133 338v-4M130 336v-3M130 336l-3 2M130 352l-3 2M130 356l-3 1M130 356l3 1M136 349v-3M144 347l-2 2M147 352l3 2v-3v-4M142 352l-3 2l3 2M153 365l-3 2M150 364l3 1M159 359v-3M164 359l3 2M173 364v-3M184 364v-3M187 349v-3M178 344l-2 2M176 339v-3M176 329l-3 2M167 334l3 2M173 328l3 1v-3M181 329l3 2M190 334v-3M201 334v-3M201 315l-3 1M201 324l3 2M198 329l-2 2M193 333l-3 1l3 2M207 344v-3M210 329v-3M201 324l-3 2M196 318l2 2v-4v-3M198 310l-2 1M204 320v-4M207 305v-3M198 300l-2 2M196 295v-3M196 285l-3 2M190 275l-3 2M176 280l-3 2M176 290l2 2M173 295l-3 2M164 300l3 2M173 305v-3M164 303v-3l-3 2M161 295v-3M161 285l-2 2M153 290l3 2M159 283l2 2v-3M167 285l3 2M176 287l2 1M176 290v-3M164 290l3 2M176 300l2 2M184 295v-3M190 295l3 2M196 298l2 2v-3M210 300v-3M213 285v-3M204 280l-3 2M201 275v-3M201 265l-3 2M193 270l3 2M198 264l3 1v-3M207 265l3 2M215 270v-3M215 260l-2 2M218 269l-3 1l3 2M213 275l-3 2M207 282l-3 1M204 280l3 2M210 270l-3 2M196 275l-3 2M196 285l2 2M193 290l-3 2M187 293l-3 2l3 2M178 305l3 1M190 315l3 1M196 308l2 2v-4M204 310l3 1M213 315v-4M213 305l-3 1M215 313l-2 2l2 1M210 320l-3 1M204 323l-3 1M204 326l3 2M204 316v-3M207 315l-3 1M190 324l3 2M196 324v-3M207 318l-3 2M207 321l-3 2M204 320l3 1M213 324v-3M213 308v-3M210 306v-3M210 306l-3 2M198 313v-3M196 311l-3 2M196 315l2 1M201 321l3 2M196 324l-3 2l-3 2M187 329l3 2l3 2M193 320l-3 1M176 326v-3M178 324l-2 2M178 334l3 2M173 341v-3M176 339l-3 2M167 344l3 2M164 356l3 1M176 362l-3 2l3 1M181 359v-3M187 359l3 2M196 364v-3M196 354l-3 2M198 362l-2 2l2 1M193 369l-3 1M184 374l3 1M178 384l3 1M196 393v-3M187 388l-3 2M184 384v-4M184 377v-3l-3 1M167 384l3 1M178 393l3 2M187 388v-3M196 387l-3 1l3 2l2 2M201 393v-3M190 393l3 2M201 403l3 2M210 398v-3M215 398l3 2M224 403v-3M235 403v-3M238 388v-3M230 384l-3 1M227 379v-4M227 369l-3 1M218 374l3 1M224 367l3 2v-4M232 369l3 1M241 374v-4M241 364l-3 1M244 372l-3 2l3 1M238 379l-3 1M232 385l-2 2M230 384l2 1M235 374l-3 1M221 379l-3 1M221 388l3 2M218 393l-3 2M213 397l-3 1l3 2M204 408l3 2M215 418l3 2M224 413v-3M230 413l2 2M238 418v-3M238 408l-3 2M241 416l-3 2l3 2M235 423l-3 2M227 428l3 1M232 418l-2 2M215 428l3 1M224 423v-3M232 425l-2 1M230 423l2 2M238 428v-3M238 411v-3M235 410v-4M235 410l-3 1M221 418l3 2l3 1M230 410l2 1M230 413v-3M244 418v-3M232 418l3 2M244 428l3 1M252 423v-3M258 423l3 2M267 428v-3M278 428v-3M281 413v-3M272 408l-3 2M269 403v-3M269 393l-2 2M261 398l3 2M267 392l2 1v-3M275 393l3 2M284 398v-3M284 379l-3 1M267 388l2 2l3 2M275 384v-4M281 384l3 1M289 388v-3M289 369l-3 1M272 379l3 1l3 2M281 374v-4M286 374l3 1M295 379v-4M284 379l2 1M295 388l3 2M304 384v-4M309 384l3 1M318 388v-3M329 388v-3M332 374v-4M323 369l-2 1M321 364v-3M321 354l-3 2M312 359l3 2M318 352l3 2v-3M326 354l3 2M335 359v-3M323 359l3 2M340 369v-4M332 364l-3 1M329 356l3 1M329 359v-3M329 349l-3 2M315 357l-3 2M315 361l-3 1M315 361l3 1M326 370l-3 2M323 369l3 1M332 364v-3M340 362l-2 2l2 1l3 2M346 369v-4M335 369l3 1M346 379l3 1M355 374v-4M360 374l3 1M369 379v-4M380 379v-4M383 364v-3M375 359l-3 2M372 354v-3M372 344l-3 2M363 349l3 2M369 343l3 1v-3M377 344l3 2M386 349v-3M397 349v-3M397 329l-3 2M397 339l3 2M394 344l-2 2M389 347l-3 2l3 2M403 359v-3M406 344v-3M397 339l-3 2M392 333l2 1v-3v-3M394 324l-2 2M400 334v-3M403 320v-4M394 315l-2 1M392 310v-4M392 300l-3 1M386 290l-3 2M372 295l-3 2M372 305l3 1M369 310l-3 1M360 315l3 1M369 320v-4M360 318v-3l-2 1M358 310v-4M358 300l-3 1M349 305l3 1M355 298l3 2v-3M363 300l3 1M372 301l3 2M372 305v-4M360 305l3 1M372 315l3 1M380 310v-4M386 310l3 1M392 313l2 2v-4M406 315v-4M409 300v-3M400 295l-3 2M397 290v-3M397 280l-3 2M389 285l3 2M394 279l3 1v-3M403 280l3 2M411 285v-3M411 265l-2 2M394 275l3 2l3 2M403 270v-3M409 270l2 2M417 275v-3M417 256l-3 1M400 265l3 2l3 2M409 260v-3M414 260l3 2M423 265v-3M411 265l3 2M423 275l3 2M431 270v-3M437 270l3 2M446 275v-3M457 275v-3M460 260v-3M451 256l-3 1M448 251v-4M448 241l-2 1M440 246l3 1M446 239l2 2v-3M454 241l3 1M463 246v-4M463 226l-3 2M446 236l2 2l3 1M454 231v-3M460 231l3 2M468 236v-3M468 216l-3 2M457 226l3 2M465 231v-3M465 211l-2 2M465 221l3 2M463 229v-3M460 228v-4M460 228l-3 1M454 231l3 2M471 241v-3M468 223v-4M471 221l-3 2l-3 1M471 231l3 2M468 236l-3 2M460 241l3 1l2 2M463 233v-4M465 231l-2 2l-3 1M451 239v-3M448 238v-4M451 236l-3 2l-2 1M451 246l3 1M446 252v-3M448 251l-2 1M440 256l3 1M437 267l3 2M448 274l-2 1l2 2M454 270v-3M460 270l3 2M468 275v-3M468 265l-3 2M471 274l-3 1l3 2M465 280l-2 2M457 285l3 2M474 295v-3M474 275l-3 2l-3 2M474 285l3 2M471 290l-3 2M463 295l2 2M480 305v-4M480 285l-3 2l-3 1M480 295l3 2M477 300l-3 1M468 305l3 1M474 295l-3 2M460 300l-3 1M460 310l3 1M457 315l-3 1M448 320l3 1M443 329l3 2M454 339l3 2M463 334v-3M468 334l3 2M477 339v-3M477 329l-3 2M480 338l-3 1l3 2M474 344l-3 2M465 349l3 2M471 339l-3 2M454 349l3 2M463 344v-3M471 346l-3 1M468 344l3 2M477 349v-3M477 333v-4M474 331v-3M474 331l-3 2M460 336v-3M463 334l-3 2M463 344l2 2M460 352v-3l-3 2l-3 1M451 354l3 2M457 344l-3 2M443 349l-3 2M443 359l3 2M440 364l-3 1M431 369l3 1M426 379l3 1M437 388l3 2M446 384v-4M451 384l3 1M460 388v-3M460 379l-3 1M463 387l-3 1l3 2M457 393l-3 2M448 398l3 2M443 408l3 2M460 418v-3M451 413l-3 2M448 408v-3M448 402v-4l-2 2M431 408l3 2M443 418l3 2M451 413v-3M460 411l-3 2l3 2l3 1M465 418v-3M454 418l3 2M465 428l3 1M474 423v-3M480 423l3 2M488 428v-3M500 428v-3M502 413v-3M494 408l-3 2M491 403v-3M491 393l-3 2M483 398l2 2M488 392l3 1v-3M497 393l3 2M505 398v-3M505 388l-3 2M508 397l-3 1l3 2M502 403l-2 2M497 410l-3 1M494 408l3 2M500 398l-3 2M485 403l-2 2M485 413l3 2M483 418l-3 2M477 421l-3 2l3 2M468 433l3 1M480 443l3 1M488 438v-4M494 438l3 1M502 443v-4M502 433l-2 1M505 441l-3 2l3 1M500 448l-3 1M491 452l3 2M508 462v-3M508 443l-3 1l-3 2M508 452l3 2M505 457l-3 2M497 462l3 2M514 472v-3M514 452l-3 2l-3 2M514 462l3 2M511 467l-3 2M502 472l3 2M508 462l-3 2M494 467l-3 2M494 477l3 2M491 482l-3 2M483 487l2 2M477 497l3 1M488 507l3 1M497 502v-4M502 502l3 1M511 507v-4M511 497l-3 1M514 505l-3 2l3 1M508 511l-3 2M500 516l2 2M517 526v-3M517 507l-3 1l-3 2M517 516l2 2M514 521l-3 2M505 526l3 2M522 536v-3"/>
<path stroke="#00f" d="M65 105v-4M68 139l3 2M62 149v-3M56 146l-3 1M68 146v-4M68 139v-3M65 131l3 2M62 136l-3 1M51 136l2 1M53 144l3 2M59 151l-3 1M48 154v-3M51 188l2 2M39 215l3 1M39 218v-3M51 218l-3 1M79 198v-3M96 198l3 2M85 215v-4M90 208v-3M85 205l-3 1M93 242l3 2M88 252v-3M82 249l-3 2M93 249v-3M93 242v-3M90 234l3 2M88 239l-3 2M76 249v-3M90 241l3 1l-3 2M88 249v-3M122 223v-4M133 210l-3 1M130 208l3 2M124 215l3 1M124 224v-3M105 259v-3M116 249l-3 2M122 249l2 2M122 262v-3M119 254l3 2M116 259l-3 1M127 259v-3M127 252v-3M124 244l3 2M122 249l-3 2M116 252l-3 2M110 249l3 2M113 257l3 2M119 264l-3 1M107 267v-3M110 302l3 1M99 328l3 1M99 331v-3M110 331l-3 2M139 311v-3M156 311l3 2M144 328v-4M150 321v-3M144 318l-2 2M153 356l3 1M142 382l2 2M130 382l3 2M130 375l3 2M139 377l-3 2M133 361l-3 1M127 344l-3 2M122 347v-3M122 341v-3M99 361l-3 1M82 357l3 2M82 361v-4M90 362v-3M99 357l-3 2M136 372l-3 2M136 359v-3M139 357l-3 2M122 338l2 1M116 347v-3M124 333l3 1M130 336l3 2M130 343v-4M142 343l-3 1M127 347v-3M139 351l3 1M147 352l-3 2M133 347l3 2M130 333l3 1M122 341l-3 2M122 347l2 2M127 351l3 1M127 354l3 2M127 357v-3M133 351v-4M142 349l2 2l-2 1M150 367v-3M173 331v-3M201 328v-4M204 326l-3 2M198 316l3 2M167 302l-3 1M159 287v-4M178 288l-2 2M170 287l-3 1M170 293l3 2M198 267v-3M215 267l3 2M204 283v-3M210 277v-3M204 274l-3 1M196 288v-3M196 311v-3M204 313v-3M213 311l2 2M207 321v-3M201 318l-3 2M196 328v-4M196 321v-3M198 313l3 2M204 316l3 2M213 318v-3M213 311v-3M210 303l3 2M207 308l-3 2M193 313l3 2M198 320l3 1M198 326l-2 2M193 326v-3M176 323l2 1M173 338l3 1M161 354l3 2M173 361l3 1M196 361l2 1M184 387l3 1M184 390v-3M196 390l-3 2M224 370v-3M241 370l3 2M230 387v-3M235 380v-3M230 377l-3 2M238 415l3 1M232 425v-4M227 421l-3 2M238 421v-3M238 415v-4M235 406l3 2M232 411l-2 2M221 421v-3M235 413l3 2l-3 1M232 421v-3M267 395v-3M278 382l-3 2M284 372l-3 2M289 375l-3 2M284 382v-3M318 356v-4M329 356l-3 1M329 362l3 2M323 352l-2 2M318 356l-3 1M312 362v-3M318 362l3 2M323 372v-3M329 365v-3M332 357l3 2M340 365l-2 2M369 346v-3M397 343v-4M400 341l-3 2M394 331l3 2M363 316l-3 2M355 301v-3M375 303l-3 2M366 301l-3 2M366 308l3 2M394 282v-3M406 269l-3 1M411 259l-2 1M417 262l-3 2M411 269v-4M446 242v-3M457 229l-3 2M454 224l3 2M460 228l3 1M465 218v-3M465 224v-3M460 224l3 2M471 234v-3M465 234l3 2M465 238v-4M463 229l2 2M448 234l3 2M446 249l2 2M434 265l3 2M446 272l2 2M468 272l3 2M474 288v-3M480 298v-3M474 301v-3M471 293l3 2M477 336l3 2M471 346v-3M465 343l-2 1M477 343v-4M477 336v-3M474 328l3 1M471 333l-3 1M460 333l3 1M463 341l2 2M468 347l-3 2M457 351v-4M460 385l3 2M448 411l3 2M448 415v-4M460 415l-3 1M488 395v-3M505 395l3 2M494 411v-3M500 405v-3M494 402l-3 1M502 439l3 2M508 456v-4M514 466v-4M508 469v-3M505 461l3 1M511 503l3 2M517 520v-4"/>
<path stroke="#000" d="M68 142v-3M56 146l-3 1M39 215l3 1M93 246v-4M90 241l3 1l3 2M133 210l-3 1M124 221v-3M96 244l-3 2M127 256v-4M116 259l-3 1M99 328l3 1M127 344l-3 2M82 357l3 2M96 359l-3 2M136 359v-3M122 341v-3M122 344v-3M122 338l2 1M133 341l3 2M124 339l-2 2M119 343l-3 1M119 346l-3 1M119 346l3 1M127 354l3 2M133 347l3 2M142 349l2 2l3 1M201 328v-4M204 326l-3 2M196 318l2 2M198 316l3 2M198 316v-3M213 315v-4M196 311v-3M198 320l3 1M201 324l-3 2M196 328v-4M161 354l3 2M184 387l3 1M238 418v-3M235 413l3 2l3 1M321 354l-3 2M329 362l3 2M397 343v-4M457 229l-3 2M434 265l3 2M477 339v-3M465 343l-2 1M448 411l3 2"/>
<path stroke="#00f" d="M68 133l-3 1M93 236l-3 2M88 239l-3 2M124 218v-3M93 246l3 1M93 249v-3M127 252l3 2M127 246l-3 1M93 361l-3 1M124 352l3 2M116 344l3 2M122 347v-3M124 339v-3M127 338l-3 1M130 339l3 2M139 344v-3M133 341l-3 2M133 334l-3 2M116 347v-3M136 343l3 1M201 324l3 2M198 320v-4M201 318l-3 2M213 305l-3 1M198 310l-2 1M196 308l2 2M204 323l-3 1M173 328l3 1M238 408l-3 2M232 411l-2 2M312 359l3 2M463 226l-3 2M446 239l2 2M477 329l-3 2"/>
<path stroke="#000" d="M68 133l-3 1M93 236l-3 2M93 246l3 1M127 246l-3 1M116 344l3 2M124 339v-3M130 339l3 2M139 344v-3M133 334l-3 2M201 324l3 2M198 320v-4M213 305l-3 1M198 310l-2 1M201 318l-3 2M238 408l-3 2M312 359l3 2M463 226l-3 2M477 329l-3 2"/>
<path stroke="#00f" d="M122 341v-3M127 338l-3 1M201 328v-4M198 316l3 2"/>
<path stroke="#00f" d="M116 344l3 2"/>
<path stroke="#000" d="M116 344l3 2"/>
</g></svg>
<div id="shadow"></div>
<div id="ed"><div id="hl"></div><div id="gut"></div><div id="hlg"></div><div id="hdr"></div><div id="band"></div><div id="tab"></div><div id="tabt">sketch_191029a</div><div id="org"></div><div id="arr"><b></b></div>
<div id="nums"><div class="n">1</div><div class="n">2</div><div class="n">3</div><div class="n">4</div><div class="n">5</div><div class="n">6</div><div class="n">7</div><div class="n">8</div><div class="n">9</div><div class="n">10</div><div class="n">11</div><div class="n">12</div><div class="n">13</div><div class="n">14</div><div class="n">15</div><div class="n">16</div><div class="n">17</div><div class="n">18</div><div class="n">19</div><div class="n">20</div><div class="n">21</div><div class="n">22</div><div class="n">23</div><div class="n">24</div><div class="n">25</div><div class="n">26</div><div class="n">27</div><div class="n">28</div><div class="n">29</div><div class="n">30</div><div class="n">31</div><div class="n">32</div><div class="n">33</div><div class="n">34</div><div class="n">35</div><div class="n">36</div><div class="n">37</div><div class="n">38</div><div class="n">39</div><div class="n">40</div><div class="n">41</div><div class="n">42</div><div class="n">43</div><div class="n">44</div><div class="n">45</div><div class="n">46</div><div class="n">47</div><div class="n">48</div><div class="n">49</div><div class="n">50</div><div class="n">51</div><div class="n">52</div><div class="n">53</div><div class="n">54</div><div class="n">55</div></div>
<div id="code"><div class="ln"><i class="c"># Baseado no L-System apresentado pela Tatasz na</i></div><div class="ln"><i class="c"># Noite de Processing hoje!</i></div><div class="ln"></div><div class="ln">axiom = <i class="s">"F+G+G"</i></div><div class="ln">sentence = axiom</div><div class="ln">stroke_len = 300</div><div class="ln">angle = <i class="f">radians</i>(-120)</div><div class="ln">rule_a = (<i class="s">"F"</i>,           <i class="s">"G"</i>)</div><div class="ln">rule_b = (<i class="s">"F+G-F-G++FF"</i>, <i class="s">"GFG"</i>)</div><div class="ln"></div><div class="ln"><i class="k">def</i> <i class="b">setup</i>():</div><div class="ln">    <i class="f">size</i> (600, 600)</div><div class="ln">    <i class="f">background</i>(220, 220, 200)</div><div class="ln">    <i class="f">scale</i>(.35)</div><div class="ln">    <i class="f">translate</i>(<i class="v">width</i> - 400, <i class="v">height</i> - 400)</div><div class="ln">    <i class="f">strokeWeight</i>(2)</div><div class="ln">    generate(5)</div><div class="ln">    plot()</div><div class="ln"></div><div class="ln"><i class="k">def</i> generate(n):</div><div class="ln">    <i class="k">global</i> stroke_len, sentence</div><div class="ln">    <i class="g">for</i> c <i class="k">in</i> <i class="k">range</i>(n):</div><div class="ln">        stroke_len *= 0.5</div><div class="ln">        nextSentence = <i class="s">""</i></div><div class="ln">        <i class="g">for</i> c <i class="k">in</i> sentence:</div><div class="ln">            found = <i class="n">False</i></div><div class="ln">            <i class="g">for</i> c_a, c_b <i class="k">in</i> zip(rule_a, rule_b):</div><div class="ln">                <i class="g">if</i> c == c_a:</div><div class="ln">                    found = <i class="n">True</i></div><div class="ln">                    nextSentence += c_b</div><div class="ln">                    <i class="g">break</i></div><div class="ln">            <i class="g">if</i> <i class="k">not</i> found:</div><div class="ln">                nextSentence += c</div><div class="ln">        sentence = nextSentence</div><div class="ln"></div><div class="ln"><i class="k">def</i> plot():</div><div class="ln">    <i class="g">for</i> c <i class="k">in</i> sentence:</div><div class="ln">        <i class="g">if</i> c == <i class="s">"F"</i>:</div><div class="ln">            <i class="f">stroke</i>(0)</div><div class="ln">            <i class="f">line</i>(0, 0, 0, -stroke_len)</div><div class="ln">            <i class="f">translate</i>(0, -stroke_len)</div><div class="ln">         <i class="c"># ellipse(0, 0, 10, 10)</i></div><div class="ln">        <i class="g">elif</i> c == <i class="s">"G"</i>:</div><div class="ln">            <i class="f">stroke</i>(0, 0, 255)</div><div class="ln">            <i class="f">line</i>(0, 0, 0, -stroke_len)</div><div class="ln">            <i class="f">translate</i>(0, -stroke_len)</div><div class="ln">        <i class="g">elif</i> c == <i class="s">"+"</i>:</div><div class="ln">            <i class="f">rotate</i>(angle)</div><div class="ln">        <i class="g">elif</i> c == <i class="s">"-"</i>:</div><div class="ln">            <i class="f">rotate</i>(-angle)</div><div class="ln">        <i class="g">elif</i> c == <i class="s">"["</i>:</div><div class="ln">            <i class="f">pushMatrix</i>()</div><div class="ln">        <i class="g">elif</i> c == <i class="s">"]"</i>:</div><div class="ln">            <i class="f">popMatrix</i>()</div><div class="ln"></div></div>
</div>
</body></html>
